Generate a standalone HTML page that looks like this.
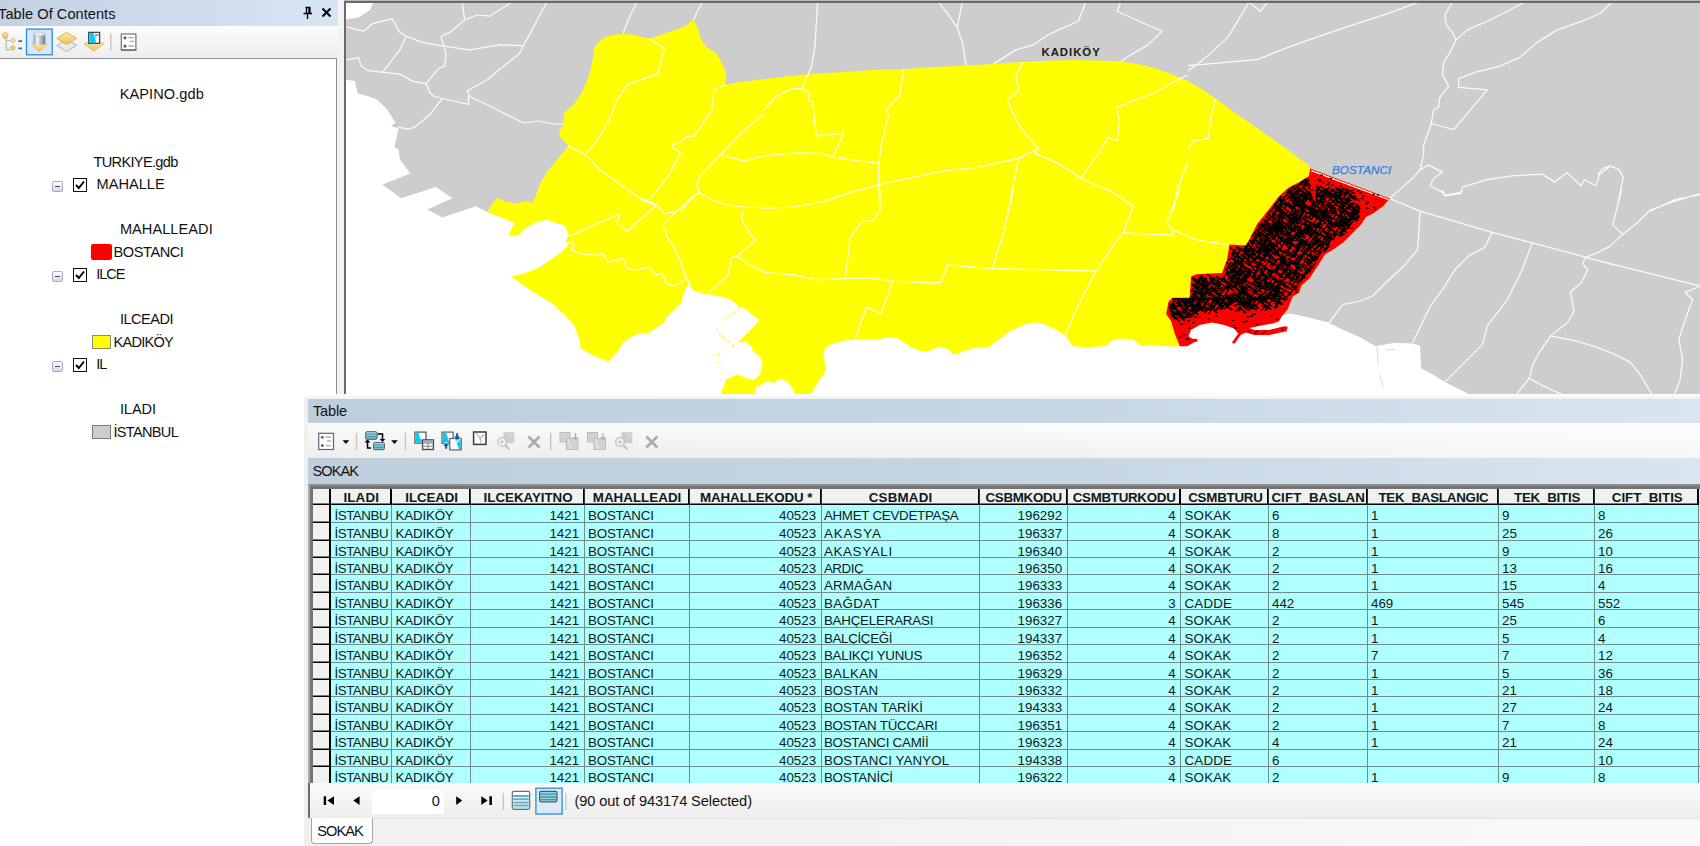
<!DOCTYPE html>
<html lang="tr"><head><meta charset="utf-8"><title>ArcMap - SOKAK</title>
<style>
*{box-sizing:border-box;margin:0;padding:0}
html,body{width:1700px;height:846px;overflow:hidden;background:#fff}
body{position:relative;font-family:"Liberation Sans",sans-serif;color:#000}
.abs,#grid,#grid div,#grid span,#grid i{position:absolute}
.ui{font-family:"Liberation Sans",sans-serif;font-size:14.6px;color:#111;white-space:nowrap;line-height:18px}
/* TOC */
#toc-title{left:0;top:0;width:338px;height:25.5px;background:linear-gradient(90deg,#c3d1e3,#d8e5f4)}
#toc-bar{left:0;top:25.5px;width:338px;height:33.5px;background:linear-gradient(#fdfdfd,#ececec)}
#toc-strip{left:337px;top:59px;width:7px;height:336px;background:#f1f3f6}
#toc-strip2{left:338px;top:0;width:6px;height:59px;background:#f1f3f6}
#toc-tree{left:-1px;top:58px;width:338px;height:800px;background:#fff;border:1px solid #8e8e8e}
.chk{width:14px;height:14px;border:1.5px solid #111;background:#fff}
.exp{width:11px;height:11px;border:1px solid #a9acb8;border-radius:2px;background:linear-gradient(#fff,#d5d8e3)}
.exp:after{content:"";position:absolute;left:2px;top:4px;width:5px;height:1.4px;background:#3d4a8c}
/* table window */
#tw{left:304px;top:394px;width:1396px;height:452px;background:linear-gradient(90deg,#f0f0f0 0%,#f0f0f0 25%,#fafafa 100%)}
#tw-border{left:304px;top:394px;width:1396px;height:5px;background:linear-gradient(#fff,#eef1f5)}
#tw-title{left:308px;top:399px;width:1392px;height:24px;background:linear-gradient(90deg,#bfcedd 0%,#c6d5e3 50%,#d9e6f1 100%)}
#tw-bar{left:308px;top:423px;width:1392px;height:35px;background:linear-gradient(90deg,rgba(255,255,255,0) 20%,rgba(255,255,255,.55) 100%),linear-gradient(#fbfbfb,#ededed)}
#tw-name{left:308px;top:458px;width:1392px;height:26px;background:linear-gradient(90deg,#bfcedd 0%,#c6d5e3 50%,#d9e6f1 100%)}
#tw-gborder{left:308px;top:483.5px;width:1392px;height:334.5px;background:#747474;border-left:2px solid #a9a9a9;border-top:2px solid #8e8e8e}
#grid{overflow:hidden;background:#b0ffff;font-size:13.33px;line-height:16px;color:#0b1a1a}
#grid .hsel{left:0;top:0;background:#f1f1f1;border-right:2px solid #000;border-bottom:1px solid #000;box-shadow:inset 0 -1px 0 rgba(0,0,0,.5);width:18.2px;height:16.2px}
#grid .hc{top:0;height:16.2px;background:#f1f1f1;border-bottom:1px solid #000;text-align:center;font-weight:bold;font-size:13.33px;box-shadow:2px 0 0 #000,inset 0 -1px 0 rgba(0,0,0,.5)}
#grid .hc{clip-path:inset(0 -2px 0 0)}
#grid .hc span{top:1.2px;line-height:15px;white-space:nowrap}
#grid .row{left:0;width:1400px;border-bottom:1px solid #6f8d8d}
#grid .sel{left:0;top:0;bottom:-1px;width:18.2px;background:#f1f1f1;border-right:2px solid #000;border-bottom:1px solid #000;box-shadow:inset 0 -1px 0 rgba(0,0,0,.5);border-top:0}
#grid .c{top:0;bottom:0;padding:2.5px 0 0 3.3px;white-space:nowrap;overflow:hidden;border-right:0;box-shadow:1px 0 0 #6f8d8d}
#grid .c.r{text-align:right;padding:2.5px 4.6px 0 0}
#nav{left:310px;top:783px;width:1390px;height:35.5px;background:linear-gradient(#fbfbfb,#eeeeee);border-bottom:1px solid #e6e6e6}
#navbox{left:372px;top:789.5px;width:72px;height:24px;background:#fff}
#tab{left:310.5px;top:818px;width:62.5px;height:26px;background:#fff;border:1px solid #a6a6a6;border-top:0;border-radius:0 0 4px 4px}
</style></head><body>
<div id="toc-title" class="abs"></div>
<div id="toc-bar" class="abs"></div>
<div id="toc-strip" class="abs"></div><div id="toc-strip2" class="abs"></div>
<div id="toc-tree" class="abs"></div>
<svg class="abs" style="left:300px;top:4px" width="36" height="18" viewBox="0 0 36 18"><g stroke="#000" fill="none"><path d="M5.5 3.5h5M6.5 3.5v6M10 3.5v6M9 3.5v6M3.5 9.5h8.5M7.5 10v5" stroke-width="1.3"/><path d="M22.5 4.5l8 8M30.5 4.5l-8 8" stroke-width="2"/></g></svg>
<!-- toolbar icons -->
<svg class="abs" style="left:0;top:27px" width="150" height="30" viewBox="0 27 150 30">
<defs>
<linearGradient id="cy" x1="0" y1="0" x2="1" y2="0"><stop offset="0" stop-color="#8c97a8"/><stop offset=".3" stop-color="#f4f6f9"/><stop offset=".55" stop-color="#c3cad5"/><stop offset="1" stop-color="#6d7787"/></linearGradient>
<linearGradient id="yl" x1="0" y1="0" x2="0" y2="1"><stop offset="0" stop-color="#fdeab0"/><stop offset="1" stop-color="#eebf55"/></linearGradient>
</defs>
<g><!-- list by drawing order -->
<path d="M6.200 38.500v11.200h4M6.200 40.500h4" stroke="#a9b4c6" stroke-width="1.200" fill="none"/>
<circle cx="5.200" cy="35.400" r="2.900" fill="url(#yl)" stroke="#dcb04a" stroke-width=".8"/>
<path d="M12.800 37.600l2.800 2.800-2.800 2.800-2.800-2.800zM12.800 45l2.800 2.800-2.800 2.800-2.800-2.800z" fill="url(#yl)" stroke="#dcb04a" stroke-width=".8"/>
<path d="M18.400 41.200h3.600M18.400 48.400h3.600" stroke="#2a6f9e" stroke-width="1.700"/></g>
<g><!-- list by source (selected) -->
<rect x="26.500" y="29.100" width="25.700" height="25.700" fill="#d6e8fa" stroke="#2b8ae0" stroke-width="1.300"/>
<path d="M31.700 44.500l7.700 7 7.700-7-3-1.300h-9.400z" fill="url(#yl)" stroke="#dcae45" stroke-width=".7"/>
<path d="M33.500 34v9.300c0 2.600 11.800 2.600 11.800 0v-9.300z" fill="url(#cy)"/>
<ellipse cx="39.400" cy="34" rx="5.900" ry="2.100" fill="#e3e8ef" stroke="#aab3c0" stroke-width=".6"/></g>
<g><!-- list by visibility -->
<path d="M66.700 39.300l9.900 6.100-9.900 6.200-9.900-6.200z" fill="#e6e8ec" stroke="#a7acb5" stroke-width=".9"/>
<path d="M66.700 32.300l9.900 6.100-9.900 6.200-9.900-6.200z" fill="url(#yl)" stroke="#d9ac48" stroke-width=".9"/></g>
<g><!-- list by selection -->
<path d="M84 43.700l9.900 7.400 9.900-7.400-3.500-1.500h-12.800z" fill="url(#yl)" stroke="#dcae45" stroke-width=".7"/>
<rect x="88.700" y="32.400" width="10.900" height="11" fill="#fff" stroke="#3d4a55" stroke-width="1.300"/>
<path d="M89.400 33.100h4.200l1 4.200 1.700 6h-6.900z" fill="#12c8ee"/>
<path d="M95 34h3.600v2h-2.200v2.500h-1z" fill="#9aa3ad"/></g>
<path d="M110.800 33.500v17" stroke="#c2c2c2" stroke-width="1.300"/>
<g><!-- options -->
<rect x="121.300" y="34" width="14.600" height="15.900" fill="#fff" stroke="#66738a" stroke-width="1.200"/>
<path d="M121 50.200h15.400" stroke="#56637a" stroke-width="1"/>
<circle cx="125" cy="37.800" r="1.600" fill="#636363"/><circle cx="125" cy="46.100" r="1.600" fill="#636363"/>
<path d="M128.300 37.600h5.700M129.500 41.400h4.500M128.300 46h5.700" stroke="#a3abb5" stroke-width="1.300"/></g>
</svg>
<!-- tree -->
<div class="abs exp" style="left:52px;top:180.500px"></div>
<div class="abs chk" style="left:73px;top:178px"></div><svg class="abs" style="left:73px;top:178px" width="14" height="14"><path d="M3 7l2.800 3 5.200-6.500" fill="none" stroke="#000" stroke-width="1.900"/></svg>
<div class="abs" style="left:91px;top:244px;width:20.500px;height:16px;background:#ff0000;border-radius:2px"></div>
<div class="abs exp" style="left:52px;top:270.500px"></div>
<div class="abs chk" style="left:73px;top:268px"></div><svg class="abs" style="left:73px;top:268px" width="14" height="14"><path d="M3 7l2.800 3 5.200-6.500" fill="none" stroke="#000" stroke-width="1.900"/></svg>
<div class="abs" style="left:92px;top:335px;width:19px;height:14px;background:#ffff00;border:1px solid #8c8c6e"></div>
<div class="abs exp" style="left:52px;top:360.500px"></div>
<div class="abs chk" style="left:73px;top:358px"></div><svg class="abs" style="left:73px;top:358px" width="14" height="14"><path d="M3 7l2.800 3 5.200-6.500" fill="none" stroke="#000" stroke-width="1.900"/></svg>
<div class="abs" style="left:92px;top:425px;width:19px;height:14px;background:#cdcdcd;border:1px solid #7d7d7d"></div>
<svg id="map" width="1700" height="846" viewBox="0 0 1700 846" style="position:absolute;left:0;top:0">
<defs><clipPath id="mc"><rect x="346" y="3" width="1354" height="391.5"/></clipPath></defs>
<rect x="344" y="0" width="1356" height="1" fill="#b9b9b9"/>
<rect x="344" y="1" width="1356" height="2" fill="#6b6b6b"/>
<rect x="344" y="1" width="2" height="394" fill="#6b6b6b"/>
<g clip-path="url(#mc)">
<rect x="344" y="0" width="1356" height="400" fill="#cdcdcd"/>
<polygon fill="#ffff00" points="488.4,209.5 497.1,197.8 504.6,201.5 514.6,203.3 527.1,201.5 533.3,202.5 539.6,184.6 547,172.1 557,159.6 568.2,145.9 559.5,135.9 559,132.2 563.2,124.7 564.5,112.2 570.7,107.3 574.5,103.5 583.2,89.8 589.4,74.8 593.2,57.4 594.4,47.4 601.9,38.7 611.9,34.9 624.4,33.7 634.3,34.9 649.3,38.7 664.3,33.7 679.2,28.7 686.7,24.9 693,20 697.9,27.4 700.4,37.4 706.7,47.4 716.7,53.6 721.6,62.4 726.1,72.3 725.4,84.8 739.1,82.3 764,79.3 801.4,74.8 838.8,72.3 876.2,69.8 903.7,69.3 938.6,66.8 966,65.4 993.5,63.9 1023.4,61.9 1050.9,60.6 1075.8,59.9 1100.7,60.4 1120.7,61.4 1138.2,63.9 1153.1,67.8 1168.1,72.8 1188,81.1 1203,89.8 1215.4,98.5 1237.9,114.7 1262.8,132.2 1287.8,149.7 1300.2,159.6 1307.7,164.1 1310.2,168.6 1389.6,198.4 1383.4,205.9 1373.5,213.3 1366,217 1361.1,224.5 1351.1,234.4 1343.7,241.9 1333.8,249.3 1325.1,254.3 1318.9,264.2 1313.9,271.7 1308.9,279.1 1301.5,285.3 1299,292.8 1292.8,296.5 1287.8,308.9 1281.6,316.4 1282,400 486,400 488.4,212.4"/>
<g fill="#ffffff">
<polygon points="343.7,2 373.7,2 369.9,10 358.7,17.5 343.7,20"/>
<polygon points="343.7,79.3 355,81.1 357.5,93.5 367.4,96 377.4,99.8 387.4,109.8 395.4,122.7 391.1,126 398.6,128.5 396.1,139.7 394.4,147.2 398.6,149.7 399.9,159.6 410.3,173.4 382.4,184.6 401.1,198.3 436,187.1 452.2,198.3 427.3,209.5 442.3,217.4 475.9,206.2 488.4,212.4 514.6,222.9 508.4,234.9 517.1,236.1 525.8,227.4 537.1,221.9 547,219.4 557,223.7 564.5,224.9 569,234.9 565.7,241.1 568.2,245.4 559.5,253.6 552,258.6 539.6,267.3 524.6,273.6 510.9,276.6 529.6,289.8 552,303.5 564.5,314.7 574.5,325.9 579.5,339.7 580.7,348.4 594.4,355.9 608.1,361.4 619.4,349.6 621.9,343.4 630.6,337.2 640.6,332.7 648.1,333.4 664.3,322.2 666.3,317.6 672.5,311.3 681.3,302.6 683.2,295.1 686.9,286.3 689.4,283.2 692,288.8 693.8,291.3 702.6,293.2 720.1,296.3 730.2,299.4 736.4,303.8 738.3,307.6 742.7,307 759,320.1 754,326.4 737.7,342.7 745.2,341.4 751.5,346.4 752.4,350.8 760,356.5 762.3,364 760,374.4 753.4,380.1 741.5,376.3 738.2,374 726.4,379.2 723.6,386.7 719.8,395.2 340,395"/>
<polygon points="754.3,395.2 756.2,386.7 761.9,384.8 765.7,381.5 771.3,381.1 773.2,383.9 775.1,381.1 780.8,379.2 786.5,381.1 791.7,386.7 795.4,395.2"/>
<polygon points="810.1,395.2 815.8,385.8 822.4,375.4 826.2,369.7 824.8,362.2 823.3,354.6 825.2,348 831.8,344.2 841.3,341.3 850,339.9 868.8,339.2 878.7,339.7 886.2,337.2 896.2,337.7 903.7,342.2 911.2,347.6 921.1,350.9 927.4,352.1 933.6,348.4 941.1,346.6 948.6,349.6 953.6,355.1 963.6,350.9 976,347.6 988.5,347.1 998.5,339.7 1008.4,332.2 1020.9,325.9 1028.4,323.4 1035.9,322.2 1045.9,324.7 1058.3,330.9 1067.1,337.2 1072.1,345.9 1085.8,347.6 1105.7,345.9 1113.2,339.7 1123.2,338.4 1133.2,339.7 1140.7,345.9 1148.1,344.7 1158.1,345.9 1173.1,346.6 1179.3,346.1 1179.8,346.2 1183.5,333.8 1194.7,321.3 1224.5,318.9 1249.3,321.3 1269.2,318.9 1281.6,315.9 1290.3,313.5 1307.7,317.2 1327.7,322.2 1342.7,329.7 1360.1,337.2 1375.1,345.9 1380.1,345.2 1395,342.7 1412.5,343.4 1420,345.9 1421.2,368.3 1434.9,375.8 1444.9,382.1 1459.9,389.6 1472.4,395.8"/>
</g>
<path d="M725 318l.6 3M717.400 328l.5 4M718.900 333.900l11.300 8.800M727.700 316.400l12.500-7.600M718 355l1.800-2.600M718.400 362.200v1M720.500 367l.4 1M723.800 373l.5 1.200M721 379l.8 1.300" stroke="#ffff00" stroke-width="1.100" stroke-dasharray="2.500 1.200" fill="none"/>
<circle cx="733.300" cy="345.800" r="1.300" fill="#ffff00"/>
<path d="M1377 346l1.300 18.600M1379.500 374.600l3.800 12.400M1386 349.600h9" stroke="#dcdcdc" stroke-width="1" fill="none"/>
<path d="M343.7 26.2 L363.7 31.2 L372.4 23.7 L392.4 18.7 L399.9 32.4 L406.1 36.2 L422.3 42.4 L443.5 46.1 L469.7 49.9 L499.6 44.9 L523.3 45.6M462.2 2 L464.7 20 L449.8 32.4 L441 36.2 L443.5 46.1 L446 53.6 L444.8 66.1 L438.5 68.6 L426.1 83.6 L429.8 92.3 L433.5 96 L442.3 98.5 L468.5 104.3 L468.5 96 L489.7 106 L523.3 123 L538.3 121 L554.5 124.2 L563.2 124M464.7 20 L477.2 15 L489.7 16.2 L512.1 2M547 2 L537.1 20 L529.6 34.9 L523.3 45.6 L519.6 53.6 L502.1 67.3 L487.2 79.8 L467.2 91 L469.7 96M343.7 59.9 L358.7 57.9 L361.2 66.1 L367.4 70.3 L382.4 72.3 L399.9 74.1 L412.3 81.1 L426.1 83.6M406.1 36.2 L399.9 49.9 L382.4 72.3M442.3 98.5 L429.8 114.7 L414.8 127.2 L408.6 129.2 L397.9 127.2M636.8 2 L629.3 17.5 L623.1 33.2M702.9 2 L696.7 12.5 L693.7 20M649.3 38.7 L664.3 48.6 L658 73.6 L626.9 84.8 L616.9 99.8 L610.6 117.2 L599.4 137.2 L586.9 152.7M568.2 145.9 L585.7 154.7 L599.4 169.6 L621.9 185.8 L641.8 199.6 L656.8 205.8M725.4 84.8 L714.2 89.8 L711.7 109.8 L694.2 135.9 L685.5 136.7 L679.2 143.4 L671.8 144.2 L673 148.4 L680.5 152.2 L671.8 169.6 L661.8 184.6 L649.3 199.6 L641.8 199.6M764 113.5 L739.1 134.7 L720.4 154.7 L699.2 177.1 L696.7 183.3 L699.2 192.1 L689.2 199.6 L681.7 211M720.4 154.7 L744.1 160.9 L764 155.9M641.8 198.7 L656.8 205 L626.9 231.2 L616.9 222.4 L619.4 213.7 L569.5 236.1M558.3 242.4 L573.2 242.9 L574.5 243.6 L572 249.9 L579.5 253.6 L594.4 255.4 L603.2 253.6 L608.1 262.3 L623.1 258.6 L626.9 268.6 L636.8 269.8 L649.3 267.3 L655.5 274.8 L661.8 273.6 L666.8 283.5 L674.2 286 L686.7 278.6M656.8 205 L664.3 213.7 L676.7 211.2 L699.2 192.5M676.7 211.2 L663 224.9 L666.8 236.1 L675.5 249.9 L681.7 264.8 L685.5 277.3 L690.5 283.5M699.2 192.5 L714.2 201.2 L729.1 205 L744.1 207 L764 208M744.1 207 L741.6 219.9 L749.1 232.4 L755.3 239.9 L736.6 256.1 L731.6 257.3 L727.9 274.8 L719.1 283.5 L709.2 292.3M736.6 256.1 L749.1 264.8 L764 271.1M817.6 2 L815.1 44.9 L811.4 67.3 L801.4 88.6M764 109.8 L776.5 96 L791.4 88.6 L801.4 88.6 L810.1 92.3 L807.7 99.8 L812.6 102.3 L816.4 135.9 L843.8 133.4 L832.6 157.1M764 155.9 L796.4 152.7 L821.4 153.4 L832.6 157.1 L858.8 160.9 L880 163.4M903.7 69.8 L899.9 94.8 L886.2 109.8 L888.7 114.7 L881.2 144.7 L878.7 164.6 L878.7 184.6 L880 211M764 208.3 L793.9 207 L826.4 200.8 L851.3 192.1 L878.7 184.6 L913.7 177.1 L943.6 170.9 L978.5 167.1 L1018.4 158.4 L1038.4 148.4M1023.4 62.4 L1015.9 74.8 L1018.4 91 L1007.2 99.8 L1015.9 119.7 L1025.9 134.7 L1038.4 148.4 L1034.6 153.4 L1058.3 163.4 L1080.8 178.3 L1109.5 190.8M1018.4 158.4 L1013.4 184.6 L1008.4 211M1188 74.8 L1173.1 82.3 L1153.1 93.5 L1133.2 101 L1117 107.3 L1119.5 122.2 L1117 140.9 L1108.2 137.2 L1095.8 157.1 L1080.8 178.3M1188 162.1 L1178.1 187.1 L1173.1 211M938.6 2 L948.6 15 L957.3 27.4 L962.3 42.4 L966 65.4M962.3 2 L957.3 27.4M1085.8 2 L1078.3 21.2 L1058.3 29.9 L1045.9 36.2 L1033.4 44.9 L1015.9 49.9 L993.5 63.9M1120.7 2 L1117 11.2 L1130.7 17.5 L1161.9 31.2 L1148.1 44.9 L1130.7 54.9 L1120.7 61.4M880 190 L880 210 L872.5 221.2 L862.5 221.2 L850.1 237.4 L847.6 259.8 L845.1 278.6M764 272.3 L793.9 274.8 L816.4 279.8 L845.1 278.6 L868.8 277.8 L892.5 281 L928.6 282.8 L941.1 282.3 L947.3 264.8 L992.2 268.6 L1045.9 269.8 L1095.8 271.1M892.5 281 L881.2 313.5 L866.3 307.2 L855 339.7M1013.4 190 L1003.5 232.4 L992.2 268.6M1109.5 190 L1133.2 206.2 L1123.2 232.4 L1115.7 242.4 L1095.8 271.1 L1080.8 299.8 L1064.6 335.9M1123.2 232.4 L1148.1 234.4 L1173.1 234.9 L1173.1 229.9 L1166.8 223.7 L1175.6 200 L1179.3 190M1173.1 229.9 L1188 236.1M1249.1 2 L1260.3 11.2 L1267.8 2M1249.1 2 L1227.9 37.4 L1203 59.9 L1188 71.1M1188 65.4 L1203 64.4 L1225.4 62.4 L1257.8 59.4 L1287.8 47.4 L1337.7 29.9 L1387.6 13.7 L1418.7 2M1452.4 2 L1444.9 15 L1446.2 24.9 L1452.4 32.4 L1456.1 39.9 L1449.9 52.4 L1443.7 62.4 L1442.4 74.8 L1448.7 86.1 L1439.9 97.3 L1438.7 107.3 L1433.7 109.8 L1431.2 123.5 L1427.5 134.7 L1423.7 144.7 L1423.7 154.7 L1420 169.6 L1412.5 178.3 L1402.5 187.1 L1390 198.3M1456.1 39.9 L1467.4 29.9 L1487.3 21.2 L1509.8 10 L1524.7 2M1612 2 L1599.6 13.7 L1582.1 21.2 L1557.2 29.9 L1537.2 42.4 L1519.8 57.4 L1499.8 66.1 L1474.9 72.3 L1458.6 78.6 L1458.6 87.3 L1487.3 89.8 L1453.7 129.7 L1431.2 123.5M1420 169.6 L1428.7 165.1 L1442.4 172.1 L1433.7 178.3 L1430 185.8 L1442.4 192.1 L1444.9 195.8 L1461.1 193.3 L1462.4 187.1 L1487.3 179.6 L1512.3 175.9 L1542.2 174.1 L1554.7 182.1 L1567.1 172.6 L1580.9 185.8 L1584.6 179.6 L1595.8 185.8 L1599.6 174.6 L1609.6 166.6M1215.4 98.5 L1211.7 112.2 L1208 138.4 L1193 140.9 L1188 149.7M1597.8 174.6 L1602.8 168.4 L1610.2 165.9 L1619 169.6 L1623.2 177.1 L1620.2 192.1 L1616.5 211M1700 194.6 L1675.1 199.6 L1650.2 211M1390 198.7 L1420 211.2 L1492.3 232.4 L1532.2 242.9 L1584.6 256.8 L1612 264.3M1420 211.2 L1418.7 234.9 L1417.5 249.9 L1402.5 267.3 L1385.1 283.5 L1372.6 296 L1360.1 301 L1342.7 304.7 L1327.7 324.7M1492.3 232.4 L1484.8 247.4 L1469.9 254.9 L1454.9 269.8 L1442.4 289.8 L1431.2 304.7 L1423.7 319.7 L1412.5 342.7M1532.2 242.9 L1522.2 269.8 L1507.3 299.8 L1487.3 325.9 L1482.3 344.7 L1462.4 364.6 L1444.9 382.1M1442.4 190 L1444.9 195 L1459.9 192.5 L1462.4 190M1188 237.4 L1203 241.1 L1227.9 244.4M1585.3 257.3 L1625.2 267.3 L1665.1 277.3 L1700 286M1621.5 190 L1616.5 210 L1612.7 224.9 L1622.7 234.4 L1610.2 246.1 L1595.3 253.6 L1585.3 257.3M1700 193.7 L1675.1 201.2 L1650.2 210 L1637.7 222.4 L1622.7 234.4M1585.3 257.3 L1582.8 263.6 L1587.8 269.8 L1581.6 282.3 L1570.3 292.3 L1574.1 311 L1567.8 322.2 L1550.4 335.9 L1537.9 354.6 L1532.9 364.6 L1529.2 378.3 L1515.5 395.8M1550.4 335.9 L1575.3 340.9 L1592.8 345.9 L1612.7 353.4 L1630.2 362.1 L1640.2 374.6 L1652.7 395.8M1700 286 L1685.1 292.3 L1692.6 299.8 L1685.1 319.7 L1678.8 339.7 L1682.6 359.6 L1680.1 379.6 L1673.9 395.8M1529.2 378.3 L1545.4 387.1 L1565.3 395.8" fill="none" stroke="#ffffff" stroke-width="1.25" stroke-opacity=".9" stroke-linejoin="round"/>
<polygon fill="#ff0000" points="1310.2,168.6 1389.6,198.4 1383.4,205.9 1373.5,213.3 1366,217 1361.1,224.5 1351.1,234.4 1343.7,241.9 1333.8,249.3 1325.1,254.3 1318.9,264.2 1313.9,271.7 1308.9,279.1 1301.5,285.3 1299,292.8 1292.8,296.5 1287.8,308.9 1281.6,316.4 1279.1,321.3 1274.2,323.1 1261.7,325.6 1249.3,328 1254.3,330 1269.2,330 1284.1,326.3 1287.8,326.8 1286.6,331.3 1269.2,335 1254.3,335 1245.6,332.5 1240.6,335 1234.4,343.7 1231.9,342.5 1238.2,333.8 1234.4,328.8 1224.5,325.1 1212.1,322.6 1199.7,325.1 1191,330 1188.5,336.2 1195.9,341.2 1187.2,346.2 1179.8,346.2 1174.8,333.8 1171.1,321.3 1166.1,313.9 1168.6,301.5 1172.3,297.8 1189.7,297.8 1191,276.6 1195.9,274.2 1222,272.9 1227,259.3 1229.5,244.4 1245.6,245.6 1249.3,239.4 1256.8,224.5 1266.7,212.1 1279.1,195.9 1289.1,187.2 1299,182.3 1308.9,176.1"/>
<polygon fill="#ff0000" points="1188,338.9 1196.7,338.7 1198,341.2 1188,342.9"/>
<path d="M1311.3 170.6L1388.3 199.5" stroke="#fff" stroke-width="1.2" fill="none"/>
<path d="M1293.9 188.8L1296.0 186.0M1326.5 192.6L1332.6 197.1M1246.0 253.0L1252.6 258.3M1304.0 257.0L1309.9 261.2M1317.6 243.4L1321.9 245.9M1200.0 293.3L1204.5 287.7M1311.2 196.2L1320.4 201.7M1261.1 296.9L1268.1 289.1M1258.4 275.7L1261.9 271.6M1277.9 274.6L1283.2 277.6M1313.7 192.8L1322.3 198.5M1272.9 277.8L1277.4 281.8M1284.5 225.9L1289.2 220.6M1285.3 279.3L1291.4 271.4M1274.9 238.3L1278.9 231.4M1170.6 306.4L1173.2 302.1M1188.7 299.1L1193.4 302.0M1191.9 283.5L1198.6 288.7M1314.4 222.2L1317.7 218.3M1243.3 292.2L1248.1 295.6M1259.9 273.5L1262.5 270.5M1241.5 279.3L1245.1 281.8M1319.6 229.0L1324.7 221.6M1280.5 247.6L1285.7 241.7M1306.6 195.6L1312.9 187.9M1326.5 205.6L1332.3 209.6M1316.0 225.7L1318.2 223.0M1266.2 300.1L1270.9 294.7M1322.4 200.8L1325.8 203.0M1270.1 248.4L1272.5 245.9M1170.0 310.3L1174.8 304.0M1263.5 249.3L1269.2 253.7M1350.6 213.4L1353.8 215.9M1193.2 278.3L1201.4 284.1M1355.2 211.6L1359.3 206.1M1266.8 225.2L1269.9 227.3M1254.9 282.7L1259.3 276.0M1316.7 219.8L1323.5 212.7M1245.2 254.0L1248.3 256.1M1320.3 186.5L1328.9 191.5M1268.8 213.4L1272.3 209.7M1253.3 273.9L1255.8 275.7M1309.1 255.7L1313.1 258.6M1252.6 275.7L1257.0 269.8M1238.5 247.9L1245.1 253.3M1172.4 304.6L1174.9 306.3M1287.8 192.4L1293.7 185.9M1337.3 231.2L1342.4 235.9M1192.5 300.8L1198.3 293.3M1263.5 301.4L1268.7 295.7M1301.1 213.7L1305.5 206.9M1311.9 247.7L1315.2 244.1M1313.1 208.8L1318.3 212.0M1258.5 279.6L1263.7 273.3M1215.3 283.9L1218.4 286.5M1259.1 250.8L1264.5 244.4M1255.7 247.5L1260.9 242.1M1241.4 309.5L1244.6 311.4M1310.0 212.2L1317.8 217.8M1262.9 303.1L1271.0 309.2M1227.4 301.6L1230.7 297.0M1309.2 218.1L1315.7 209.3M1279.8 233.3L1285.8 225.5M1295.6 271.4L1298.7 267.3M1291.2 221.2L1296.2 215.8M1260.7 276.1L1263.1 272.5M1205.0 307.1L1210.6 310.7M1231.2 289.5L1233.5 285.5M1267.5 229.4L1272.6 234.1M1275.5 226.8L1284.3 231.9M1239.4 274.7L1245.7 267.2M1356.9 214.8L1359.3 211.3M1288.9 255.4L1291.3 252.3M1280.4 232.4L1282.7 234.3M1330.7 211.2L1333.3 213.1M1246.0 274.5L1249.8 268.6M1296.9 236.2L1302.2 239.9M1237.6 246.7L1241.9 250.7M1221.3 304.5L1227.4 295.6M1226.1 294.9L1230.3 297.8M1337.6 189.9L1346.1 195.5M1260.9 311.1L1263.7 308.0M1251.3 276.9L1259.4 284.3M1347.7 227.5L1352.5 222.1M1313.8 230.1L1318.6 234.4M1256.7 266.0L1263.8 271.8M1177.8 310.0L1180.7 311.9M1283.2 226.9L1288.8 232.6M1216.6 279.4L1220.4 283.2M1307.5 265.7L1310.1 261.6M1199.5 290.7L1206.3 296.9M1282.8 221.6L1289.9 227.5M1282.5 253.4L1285.6 249.5M1272.1 228.5L1279.1 220.1M1303.6 240.3L1309.4 243.7M1340.4 213.1L1344.0 209.0M1342.1 208.6L1348.7 199.9M1259.0 295.2L1261.6 297.2M1236.3 300.6L1244.0 305.6M1289.9 278.5L1294.7 282.0M1293.0 208.8L1297.2 204.1M1237.4 271.2L1242.7 263.5M1273.1 272.4L1277.1 267.6M1296.1 240.8L1300.5 234.7M1308.8 208.2L1311.4 204.8M1279.6 231.4L1281.5 228.6M1192.9 297.8L1196.9 290.9M1238.5 252.0L1241.2 248.7M1238.3 284.1L1246.5 289.3M1171.2 306.9L1179.7 312.8M1287.3 265.0L1290.8 267.8M1265.8 237.2L1271.8 228.3M1325.5 207.0L1329.1 202.7M1291.1 219.4L1298.0 224.1M1251.9 245.3L1257.7 236.1M1254.6 239.2L1262.3 244.7M1323.6 252.0L1325.8 248.6M1346.4 225.5L1350.2 219.6M1190.6 306.2L1196.7 297.3M1344.6 199.4L1349.6 202.3M1313.2 197.7L1318.1 202.2M1260.0 262.2L1262.7 264.0M1340.0 199.4L1346.1 203.4M1288.8 227.2L1295.3 231.3M1338.7 194.4L1342.3 189.7M1311.4 207.1L1316.4 211.2M1265.2 310.4L1270.3 304.3M1276.1 219.0L1280.9 223.1M1235.9 301.9L1242.0 293.3M1274.5 225.9L1280.5 229.8M1196.2 312.9L1200.2 306.6M1348.7 195.2L1355.3 199.9M1293.2 238.7L1295.4 236.0M1307.4 249.1L1311.3 243.9M1293.5 205.7L1298.2 199.0M1189.2 305.1L1193.1 308.4M1271.6 237.3L1280.1 243.4M1330.6 208.4L1334.4 204.3M1335.9 222.0L1344.1 227.4M1257.6 256.6L1262.0 251.8M1307.1 257.9L1311.7 262.0M1281.1 260.5L1283.0 257.9M1184.9 309.2L1190.9 315.3M1270.7 275.6L1273.1 271.6M1288.5 222.6L1293.7 214.8M1292.8 218.7L1295.3 220.7M1304.8 227.8L1310.5 233.1M1278.8 220.7L1281.0 216.6M1260.8 295.7L1266.3 290.3M1278.7 198.4L1282.4 201.5M1311.9 240.5L1315.1 236.2M1248.0 260.2L1254.2 252.3M1269.8 289.1L1273.1 284.5M1194.8 297.8L1200.1 301.6M1337.2 209.1L1344.8 213.9M1306.9 263.1L1311.4 266.4M1309.1 193.4L1311.4 189.9M1185.9 308.0L1190.9 311.4M1263.1 267.9L1267.6 270.1M1211.9 304.4L1217.2 297.9M1289.9 259.5L1296.4 264.4M1288.8 193.7L1292.1 188.4M1306.2 200.9L1308.0 198.3M1340.8 227.4L1344.9 221.9M1276.5 253.5L1283.4 257.8M1308.6 268.8L1312.1 263.8M1297.1 265.1L1302.2 257.7M1208.7 295.4L1211.2 291.9M1322.3 203.7L1325.6 206.3M1320.2 234.4L1326.4 239.8M1317.8 243.6L1322.8 246.8M1306.7 216.1L1311.1 219.5M1260.4 269.9L1264.2 265.4M1193.0 299.8L1196.0 296.2M1283.7 259.4L1289.4 262.9M1319.9 208.9L1322.6 205.5M1328.2 203.0L1335.5 208.2M1251.8 307.5L1254.6 303.5M1263.3 257.8L1266.4 253.2M1301.6 247.3L1306.0 251.4M1285.5 275.0L1288.2 277.6M1259.7 290.8L1264.6 283.6M1286.3 223.3L1293.5 229.0M1261.9 223.5L1266.1 227.4M1306.1 196.6L1308.3 194.2M1284.9 270.1L1289.6 263.3M1253.8 291.8L1260.2 284.2M1336.4 195.4L1340.4 198.6M1291.5 210.2L1295.8 205.3M1276.7 244.6L1280.9 240.4M1192.0 284.8L1198.7 290.3M1286.9 232.1L1290.1 234.9M1277.3 244.6L1282.7 237.0M1235.7 274.6L1241.0 267.0M1310.8 222.6L1319.9 228.4M1229.6 268.0L1234.8 262.2M1338.6 235.8L1344.6 227.6M1324.2 220.2L1327.2 216.0M1196.6 312.7L1199.0 309.3M1317.6 252.4L1321.9 247.0M1240.5 290.7L1243.4 292.6M1243.5 279.1L1245.9 281.0M1240.9 253.9L1244.4 257.3M1259.1 261.7L1262.2 263.7M1322.6 216.8L1328.2 221.3M1319.7 202.5L1323.9 196.7M1260.6 257.7L1264.5 261.3M1282.6 266.9L1284.6 264.2M1302.8 187.3L1308.9 192.6M1169.1 307.9L1175.6 313.7M1298.5 219.3L1301.6 221.5M1320.6 197.7L1327.5 201.7M1236.2 282.8L1244.4 289.2M1179.2 316.2L1184.1 320.9M1288.7 196.3L1292.2 199.0M1253.6 304.9L1257.7 308.0M1218.4 297.5L1222.1 301.0M1264.0 266.0L1271.8 271.6M1250.9 254.4L1256.8 247.2M1289.1 203.8L1292.0 205.8M1309.2 238.6L1312.8 234.0M1245.7 289.9L1249.2 286.2M1199.9 295.6L1207.1 300.5M1277.5 299.8L1282.5 304.0M1334.2 227.7L1340.1 219.5M1308.4 244.8L1312.9 239.0M1308.6 212.6L1315.9 217.2M1186.0 305.2L1188.3 301.9M1262.3 248.7L1265.6 250.9M1296.0 248.3L1300.9 240.0M1246.5 303.5L1252.8 295.0M1316.3 223.4L1323.1 228.9M1241.6 255.2L1249.8 262.0M1349.8 214.4L1351.6 211.9M1295.5 213.2L1301.5 206.2M1289.5 212.5L1296.7 218.6M1278.7 218.8L1282.2 214.8M1254.4 276.7L1258.1 279.5M1304.0 241.9L1309.2 246.1M1240.8 263.8L1243.7 260.6M1338.3 209.9L1341.1 206.7M1177.1 301.8L1183.0 305.8M1327.6 232.7L1334.4 224.1M1246.2 277.2L1251.5 271.3M1265.2 282.5L1272.3 286.5M1290.3 280.5L1292.2 278.2M1276.5 235.1L1282.3 240.4M1254.1 280.1L1259.9 284.4M1280.8 275.0L1287.3 267.6M1262.1 245.1L1268.2 238.0M1208.7 293.6L1216.4 299.6M1317.0 258.2L1321.1 252.4M1298.2 231.2L1305.2 236.0M1243.7 253.7L1251.2 246.0M1259.3 238.0L1266.0 244.0M1292.0 216.0L1299.9 223.6M1266.1 249.4L1269.0 251.4M1278.0 270.0L1280.0 267.7M1197.6 285.5L1205.1 292.3M1178.7 312.7L1185.1 317.3M1242.4 291.4L1247.2 285.0M1225.4 305.9L1232.2 309.8M1351.4 215.3L1356.0 209.2M1326.5 226.1L1332.1 229.9M1323.7 214.2L1326.7 209.9M1327.2 193.0L1335.1 197.9M1288.1 259.1L1293.2 263.9M1245.0 252.6L1247.8 249.8M1264.4 252.9L1271.3 258.9M1318.0 209.4L1321.1 211.7M1273.8 227.0L1281.1 232.0M1323.6 231.7L1331.6 238.2M1333.9 194.4L1338.8 197.7M1303.1 247.6L1307.5 240.9M1305.0 185.2L1309.1 180.2M1313.3 202.7L1318.3 196.4M1296.2 264.5L1301.2 256.9M1262.3 274.9L1269.4 279.4M1274.0 205.1L1279.8 199.4M1272.3 215.6L1275.5 210.8M1336.9 194.9L1344.9 200.1M1273.3 289.3L1276.2 286.1M1341.0 223.6L1345.2 218.6M1258.0 231.0L1260.2 228.4M1259.8 283.1L1265.0 288.4M1291.4 211.2L1299.2 215.7M1225.5 270.8L1230.4 262.6M1273.9 229.7L1276.7 231.6M1275.0 272.4L1281.8 264.3M1261.3 252.4L1267.0 246.9M1287.3 195.8L1292.9 199.2M1202.3 285.5L1206.5 278.9M1199.8 285.2L1203.3 279.7M1274.7 225.5L1280.7 229.6M1264.7 243.0L1272.4 235.5M1287.0 297.2L1290.7 292.9M1294.2 261.8L1298.6 256.6M1291.2 217.8L1297.3 223.1M1332.0 208.1L1335.4 210.4M1279.5 259.8L1282.2 255.6M1204.9 284.5L1208.7 287.7M1272.5 213.7L1279.2 205.9M1277.0 302.5L1279.8 299.4M1262.5 254.9L1269.3 246.6M1265.1 248.2L1271.4 239.5M1287.7 237.0L1289.5 234.5M1282.1 206.7L1285.5 209.0M1335.0 198.2L1341.4 204.4M1266.6 227.1L1273.6 230.6M1322.9 192.1L1326.8 194.5M1253.4 298.3L1256.2 299.7M1221.5 280.0L1226.4 274.0M1314.1 214.7L1319.3 217.2M1266.9 228.3L1270.3 230.5M1287.7 205.7L1291.8 209.5M1213.0 308.0L1218.6 301.2M1289.9 228.1L1293.6 231.3M1321.0 201.1L1326.3 193.7M1309.3 249.0L1315.5 253.0M1251.7 257.1L1257.3 262.4M1192.4 279.3L1198.0 284.2M1317.4 241.3L1321.1 237.2M1198.7 310.7L1204.0 304.7M1340.0 221.7L1345.0 214.3M1337.7 228.7L1340.6 224.4M1228.2 305.7L1232.1 300.9M1297.3 229.5L1303.6 222.6M1226.0 269.9L1232.5 274.4M1308.1 226.8L1310.6 222.8M1268.7 297.2L1273.4 301.6M1270.2 265.5L1275.5 259.7M1229.4 282.6L1234.5 287.1M1292.6 255.3L1297.6 258.5M1268.2 214.9L1274.0 218.5M1205.1 288.1L1209.4 292.2M1315.4 209.7L1324.5 214.6M1244.2 305.2L1247.7 300.3M1343.9 230.8L1346.7 232.3M1302.8 209.4L1310.1 214.8M1290.0 218.5L1296.6 222.1M1196.2 301.2L1199.2 304.0M1344.4 197.5L1348.0 200.0M1298.1 187.2L1304.3 192.7M1282.9 261.9L1285.1 259.3M1187.6 317.5L1189.6 315.2M1288.4 260.1L1294.5 252.5M1356.8 211.3L1359.4 207.7M1244.9 256.3L1249.4 259.7M1311.8 218.6L1315.2 213.3M1346.0 217.6L1352.2 210.3M1296.2 190.7L1298.6 188.2M1301.1 222.6L1305.8 225.6M1265.1 266.6L1269.4 259.7M1311.0 234.9L1315.3 229.1M1283.6 272.9L1291.3 278.2M1315.1 213.3L1319.8 216.8M1280.3 263.7L1285.4 256.3M1294.7 196.5L1304.1 201.5M1342.6 220.4L1349.4 227.1M1235.6 292.8L1238.5 295.0M1301.8 241.1L1305.4 243.6M1295.0 265.9L1298.6 269.3M1345.9 212.8L1348.6 215.3M1304.8 223.1L1309.3 216.6M1330.3 192.5L1337.8 198.9M1204.9 304.5L1208.8 299.9M1268.3 252.3L1272.4 246.1M1183.6 302.0L1185.6 298.9M1313.5 260.8L1316.6 257.4M1231.6 304.2L1234.2 301.0M1288.9 222.6L1291.4 224.4M1215.2 304.6L1218.9 299.4M1333.4 213.1L1337.4 215.5M1293.1 284.0L1298.9 276.6M1205.3 312.0L1207.3 309.7M1178.2 314.2L1182.2 316.9M1285.0 234.9L1289.1 237.1M1199.7 306.1L1205.0 297.7M1297.9 218.6L1301.4 221.0M1264.3 241.4L1272.6 248.0M1246.0 270.7L1251.0 275.0M1247.7 307.4L1253.2 299.4M1279.8 225.3L1282.9 221.3M1273.5 207.2L1276.2 209.0M1238.2 267.7L1245.1 272.8M1232.1 269.2L1240.1 276.1M1266.6 216.6L1274.3 221.8M1311.2 203.7L1320.1 208.6M1329.9 207.8L1336.5 212.0M1309.6 200.0L1316.2 205.8M1253.8 288.6L1259.0 282.8M1290.5 193.5L1297.7 198.6M1308.5 233.1L1314.2 225.3M1336.6 192.1L1343.0 195.7M1308.6 253.8L1311.0 255.8M1300.9 212.3L1303.9 208.2M1266.7 222.6L1270.9 216.2M1232.3 293.8L1236.1 296.2M1320.3 200.7L1323.7 196.1M1320.2 245.2L1325.0 248.3M1176.1 306.6L1182.3 299.7M1310.3 193.4L1316.8 199.5M1280.1 237.7L1286.0 242.8M1292.6 272.4L1299.0 265.7M1213.2 297.0L1219.7 301.1M1274.6 308.5L1280.1 301.0M1232.8 264.7L1234.6 262.3M1246.0 263.3L1252.5 266.7M1200.9 310.3L1206.6 302.7M1209.5 308.9L1212.5 304.2M1274.1 269.0L1282.1 276.3M1296.5 195.3L1299.3 197.6M1286.3 239.1L1293.0 244.0M1288.8 234.2L1293.6 229.0M1242.1 284.2L1246.0 287.3M1271.9 239.4L1277.5 233.1M1278.4 295.6L1281.7 298.8M1350.3 203.4L1354.7 207.8M1296.8 226.2L1305.1 232.9M1317.8 225.6L1322.3 219.8M1242.4 283.5L1245.5 279.2M1288.3 218.7L1293.4 210.6M1276.4 226.9L1280.3 229.9M1246.6 296.1L1249.6 293.0M1199.6 284.5L1203.6 279.9M1324.0 229.3L1326.8 226.3M1309.2 235.5L1314.0 238.7M1263.1 299.2L1268.2 302.8M1277.3 220.1L1282.2 213.3M1312.0 246.7L1318.5 252.8M1338.2 198.0L1341.3 193.8M1326.9 214.9L1331.1 218.4M1235.1 263.2L1240.2 256.3M1314.5 244.7L1319.8 239.2M1269.2 243.0L1276.2 246.9M1274.2 205.7L1283.3 211.5M1279.2 279.8L1281.8 281.8M1264.4 240.5L1268.0 236.7M1243.8 278.0L1250.9 270.0M1301.6 202.9L1309.1 208.0M1328.7 223.2L1334.7 216.8M1304.4 183.2L1312.4 188.7M1290.0 283.3L1296.2 288.3M1276.8 221.8L1279.4 223.9M1316.6 248.9L1323.0 242.1M1258.1 299.2L1263.1 294.0M1232.3 269.3L1240.7 275.7M1310.2 234.1L1311.8 231.5M1260.2 268.9L1264.2 271.2M1235.4 306.7L1237.9 303.6M1279.0 267.4L1285.2 271.8M1306.3 244.2L1309.6 246.3M1260.9 229.3L1268.8 235.6M1310.5 213.7L1316.4 205.3M1257.4 234.4L1260.0 236.4M1275.2 262.9L1277.4 259.3M1273.6 299.7L1278.9 293.4M1286.4 245.3L1289.3 241.6M1327.3 204.0L1335.9 210.5M1265.9 279.3L1272.3 271.9M1331.6 189.9L1335.9 193.2M1278.7 224.7L1281.8 226.5M1280.6 249.4L1288.8 255.8M1276.6 211.1L1283.2 204.0M1336.2 200.4L1343.1 205.6M1311.8 215.0L1318.1 218.6M1231.9 254.1L1235.9 258.1M1326.4 220.3L1332.1 224.8M1215.5 284.1L1220.7 278.2M1181.8 300.5L1188.1 305.7M1309.9 200.8L1315.3 194.2M1218.9 290.8L1222.5 287.2M1241.8 281.8L1247.4 275.0M1183.7 311.3L1187.4 314.2M1240.0 294.7L1246.4 287.7M1297.6 218.6L1300.0 216.0M1295.3 221.1L1298.8 223.5M1234.1 259.6L1239.5 252.1M1211.8 289.4L1219.7 296.3M1333.4 211.2L1336.0 212.7M1257.2 251.3L1262.5 244.4M1310.6 263.4L1316.0 254.3M1268.4 213.9L1271.9 209.6M1319.7 195.0L1322.9 197.1M1219.1 296.4L1225.1 287.3M1256.1 282.2L1262.7 287.3M1239.5 302.8L1246.7 309.5M1238.2 309.6L1240.3 307.3M1255.6 281.5L1258.5 283.1M1202.2 284.0L1206.9 288.0M1349.2 208.3L1357.7 213.3M1206.9 307.4L1210.4 310.3M1231.5 277.9L1237.3 270.7M1212.1 300.7L1215.5 296.9M1255.0 260.8L1257.5 256.6M1313.1 204.6L1317.0 198.0M1345.6 193.3L1348.0 190.7M1312.8 205.2L1317.4 199.5M1293.3 254.3L1297.5 248.8M1267.4 272.1L1275.0 279.7M1200.2 275.7L1205.0 279.7M1353.9 215.7L1356.1 213.0M1300.0 206.7L1302.2 208.8M1258.6 277.8L1262.2 273.5M1183.3 320.1L1185.5 316.7M1311.2 228.7L1316.6 233.0M1291.0 243.0L1297.1 247.6M1234.3 283.5L1239.4 275.5M1302.0 277.0L1304.5 273.9M1287.2 216.8L1294.2 222.0M1355.3 204.0L1358.6 206.8M1174.3 309.6L1177.5 305.5M1199.7 280.1L1202.2 276.4M1220.1 282.7L1228.5 288.9M1334.2 222.9L1341.1 226.5M1321.1 241.3L1325.0 244.1M1247.8 258.2L1252.6 250.8M1291.0 276.1L1294.5 279.1M1226.6 272.4L1229.6 274.4M1225.8 288.8L1228.6 290.7M1265.6 227.2L1273.3 232.2M1253.5 303.4L1257.2 298.7M1288.6 221.3L1295.7 213.5M1232.8 254.1L1235.1 251.1M1220.8 292.0L1226.3 285.5M1227.9 298.0L1230.2 294.3M1313.4 235.7L1321.3 242.0M1254.4 260.9L1259.6 253.6M1283.7 217.7L1287.7 220.1M1264.9 298.3L1270.6 292.7M1225.5 280.4L1231.6 285.9M1318.2 217.8L1325.4 210.0M1229.3 298.7L1233.2 302.4M1286.4 233.0L1290.4 235.6M1312.5 215.6L1318.6 209.2M1239.2 302.7L1244.4 295.7M1295.4 188.4L1302.4 181.2M1191.0 317.2L1197.5 310.0M1257.1 242.3L1261.7 245.9M1286.0 252.2L1289.8 246.6M1243.8 297.2L1248.1 290.4M1224.7 308.5L1231.6 300.0M1352.4 208.3L1357.4 211.5M1189.2 313.1L1193.8 307.1M1207.9 309.0L1212.1 302.1M1262.2 288.1L1264.9 284.9M1275.0 296.1L1279.6 289.4M1338.4 192.3L1341.2 194.2M1248.4 263.0L1252.2 266.1M1195.5 288.2L1203.4 293.7M1305.2 190.3L1312.4 195.3M1219.6 300.2L1221.4 297.8M1271.9 234.7L1275.5 237.9M1336.7 230.6L1339.0 227.0M1259.0 239.6L1263.5 242.3M1267.3 247.5L1270.5 243.7M1309.3 228.4L1313.3 223.0M1258.1 254.0L1263.3 248.0M1299.5 271.2L1304.3 265.1M1298.1 228.7L1302.1 224.0M1260.0 248.1L1262.4 250.1M1272.3 290.0L1277.4 294.5M1282.7 288.9L1290.7 293.9M1338.4 216.8L1346.0 220.8M1183.5 313.0L1185.6 310.4M1262.1 287.6L1267.1 279.0M1305.0 270.2L1307.4 267.1M1349.8 208.0L1354.3 203.3M1287.9 276.7L1295.1 269.4M1320.3 234.6L1327.5 239.8M1285.1 227.6L1290.8 218.2M1278.8 222.5L1283.1 226.3M1275.7 252.7L1283.8 260.1M1261.2 301.4L1266.2 293.8M1279.8 243.0L1284.8 235.2M1185.5 301.0L1193.1 306.7M1329.3 222.4L1332.7 218.4M1290.1 214.0L1298.4 220.6M1309.7 195.0L1318.8 200.9M1270.3 288.6L1276.3 280.9M1334.7 215.9L1336.6 213.4M1339.2 207.1L1342.1 209.3M1221.2 302.1L1227.0 296.4M1328.7 219.0L1334.9 210.5M1258.7 290.4L1261.5 292.4M1293.6 245.5L1296.9 248.3M1298.1 261.6L1304.7 253.6M1278.6 205.5L1282.5 200.1M1235.6 286.9L1243.6 293.6M1295.5 200.7L1299.9 203.9M1356.1 214.3L1359.0 210.5M1297.2 285.2L1303.4 276.4M1266.9 229.7L1269.5 225.9M1201.0 299.8L1203.3 296.5M1279.8 282.6L1284.3 286.7M1282.0 282.4L1286.5 274.7M1234.7 277.2L1242.3 269.4M1287.7 274.4L1291.3 269.8M1191.5 309.6L1194.8 312.1M1280.4 296.5L1285.0 290.6M1256.9 287.8L1259.2 284.5M1340.4 231.8L1345.6 226.0M1249.0 249.7L1253.7 242.8M1294.1 237.6L1303.2 242.3M1294.1 246.5L1303.2 251.6M1325.3 248.5L1329.0 243.2M1320.5 186.3L1324.3 189.2M1351.5 218.1L1355.5 213.7M1305.7 216.4L1308.3 218.0M1195.8 306.5L1199.1 301.4M1259.0 223.7L1264.8 228.3M1294.1 198.9L1299.1 192.2M1218.2 287.0L1224.1 291.1M1263.5 228.7L1271.3 234.3M1226.5 273.6L1233.5 278.8M1235.3 270.1L1240.2 274.3M1309.6 212.4L1313.4 215.8M1171.5 315.5L1175.1 318.7M1261.6 229.5L1264.1 231.8M1303.8 231.7L1310.5 224.6M1230.7 302.8L1233.5 299.2M1317.5 233.6L1320.3 229.3M1305.9 205.7L1309.8 208.2M1277.7 226.5L1282.2 221.0M1332.1 188.8L1336.3 191.0M1236.5 310.9L1240.2 305.8M1293.2 236.4L1297.8 240.4M1325.0 215.2L1327.6 216.9M1294.0 247.7L1300.7 240.6M1271.6 236.5L1277.9 230.0M1338.2 221.0L1341.0 223.2M1342.8 206.4L1347.0 200.8M1222.3 277.6L1225.3 280.7M1264.4 246.6L1270.2 251.0M1274.1 220.1L1279.7 213.4M1329.4 227.7L1336.2 232.6M1169.6 306.6L1173.1 309.0M1295.0 272.4L1299.4 275.0M1198.7 281.7L1202.9 277.4M1297.1 272.8L1305.1 277.8M1292.6 195.6L1298.0 189.0M1249.3 295.2L1257.6 300.5M1205.3 306.5L1208.4 309.1M1239.0 310.9L1241.5 307.9M1320.5 221.1L1326.4 214.5M1250.4 290.2L1256.4 294.0M1232.9 287.5L1237.6 279.6M1355.8 205.9L1359.8 208.9M1282.4 298.6L1284.8 300.5M1321.5 216.8L1326.5 210.9M1287.0 199.0L1293.1 191.2M1326.3 242.1L1328.2 238.8M1245.4 254.3L1250.4 247.9M1329.4 198.3L1335.2 202.3M1347.1 208.9L1352.6 202.8M1288.9 265.7L1292.9 261.2M1290.6 281.4L1296.3 273.8M1215.2 296.8L1219.2 299.9M1238.8 293.8L1241.2 289.7M1314.1 239.5L1317.5 234.1M1268.7 285.5L1273.9 289.0M1278.3 215.0L1281.6 210.0M1223.3 279.1L1228.6 282.3M1240.3 280.7L1243.7 282.9M1295.8 216.5L1301.8 220.8M1324.0 195.6L1327.7 191.7M1304.3 268.2L1306.8 265.1M1255.4 246.2L1261.0 249.5M1227.7 274.8L1232.7 267.3M1335.4 204.4L1342.2 208.4M1234.7 268.8L1241.3 260.7M1342.4 212.8L1344.4 210.2M1314.8 194.5L1319.1 188.9M1237.4 295.0L1239.6 291.4M1326.3 235.8L1330.6 239.3M1294.7 222.7L1297.3 219.9M1280.5 280.2L1284.5 283.6M1273.2 272.9L1277.1 266.9M1226.9 296.2L1231.5 300.1M1245.0 304.5L1251.0 309.4M1189.4 299.0L1194.8 290.7M1284.5 203.2L1291.7 207.0M1223.4 296.7L1228.6 290.4M1298.6 203.1L1304.7 207.6M1257.0 298.1L1259.9 300.2M1317.6 242.7L1326.0 249.5M1340.8 205.3L1343.3 201.9M1276.1 205.2L1281.2 210.2M1356.0 221.4L1359.5 216.4M1333.5 235.9L1339.2 227.1M1281.6 247.0L1285.7 241.3M1189.0 303.4L1193.9 297.5M1228.4 276.4L1236.5 283.2M1316.7 239.8L1323.1 243.7M1303.5 205.7L1308.1 209.0M1253.4 293.7L1255.8 291.2M1171.9 307.2L1174.0 304.1M1231.4 272.1L1235.9 265.3M1264.8 226.3L1267.8 221.5M1279.4 264.3L1284.9 258.5M1263.3 256.1L1267.1 251.2M1229.8 258.9L1234.6 253.1M1255.1 259.9L1259.6 254.8M1290.5 253.5L1292.8 255.6M1228.3 306.4L1231.6 302.7M1343.5 199.1L1348.5 202.5M1209.9 278.2L1213.0 280.9M1269.3 294.4L1272.2 291.3M1331.2 236.2L1333.3 233.3M1253.4 283.5L1261.2 289.1M1323.5 214.5L1329.1 205.9M1214.9 310.7L1220.5 304.8M1228.8 301.7L1234.0 295.0M1276.7 215.6L1280.1 218.4M1285.2 234.5L1290.4 227.6M1297.3 192.8L1301.4 196.4M1317.5 246.3L1319.9 243.4M1211.9 289.3L1217.1 294.3M1302.9 198.1L1306.0 192.6M1259.2 234.6L1263.7 229.8M1276.0 300.7L1280.8 304.4M1211.0 280.7L1213.9 277.3M1231.5 273.3L1237.2 267.3M1263.3 303.7L1266.0 305.4M1301.2 280.8L1307.1 271.8M1246.0 259.2L1250.9 262.5M1264.7 258.8L1273.2 264.9M1294.5 263.2L1299.4 256.8M1265.9 275.5L1269.0 271.0M1264.0 221.7L1265.9 219.0M1300.8 231.0L1304.1 233.5M1229.3 304.5L1232.4 300.3M1325.9 241.5L1328.8 244.3M1239.7 265.3L1245.1 269.0M1306.4 219.4L1310.2 222.2M1273.3 242.7L1281.2 250.2M1286.8 269.0L1295.0 273.4M1272.5 284.9L1277.8 289.0M1340.0 226.4L1343.5 222.3M1299.0 194.4L1305.5 199.1M1329.6 215.9L1337.0 220.8M1232.8 286.7L1238.1 279.6M1216.8 302.9L1223.2 308.5M1346.6 228.9L1349.4 224.9M1267.3 293.8L1273.4 285.5M1258.9 226.9L1262.0 222.8M1301.3 210.1L1303.8 212.2M1301.7 209.8L1307.7 213.3M1293.3 201.8L1302.3 207.9M1202.2 282.9L1205.4 278.0M1259.5 254.4L1265.2 248.8M1279.6 227.6L1283.5 223.5M1340.0 208.6L1344.3 203.5M1355.7 211.2L1358.2 207.8M1290.5 233.1L1295.9 225.9M1173.3 315.5L1177.5 310.3M1280.0 205.6L1282.6 202.9M1281.6 293.4L1286.2 297.7M1273.6 250.8L1282.7 256.8M1310.1 210.7L1314.7 204.1M1295.1 213.4L1304.1 218.8M1186.2 317.5L1188.7 314.2M1317.3 203.9L1319.8 200.7M1184.5 302.5L1187.9 299.2M1222.6 280.9L1229.9 285.3M1255.3 249.2L1261.0 241.5M1317.3 254.9L1323.1 249.1M1293.3 260.9L1298.6 264.4M1284.4 239.0L1289.0 243.1M1252.1 261.0L1258.3 265.2M1341.6 208.4L1349.6 213.8M1200.4 292.4L1206.7 296.8M1295.6 249.0L1300.1 242.7M1231.1 258.1L1237.5 262.6M1308.1 188.9L1311.6 183.7M1287.1 267.6L1291.9 272.1M1222.9 277.6L1226.2 280.4M1241.2 291.8L1248.0 283.4M1291.5 200.5L1295.9 204.5M1337.8 227.2L1344.3 231.3M1296.8 282.2L1303.4 274.6M1293.5 196.5L1297.5 190.2M1269.1 292.0L1278.8 296.8M1214.5 304.1L1220.0 296.7M1305.2 223.0L1308.2 225.1M1285.5 229.9L1289.3 225.7M1267.4 221.1L1269.4 218.6M1236.4 255.1L1242.1 248.4M1317.0 192.3L1324.4 198.9M1196.2 308.9L1199.7 304.8M1237.1 289.6L1242.1 294.0M1311.3 193.7L1316.3 187.5M1350.7 218.5L1355.8 210.9M1299.4 227.5L1307.1 234.4M1255.1 274.2L1258.4 269.7M1265.3 289.0L1270.4 282.1M1244.7 301.1L1247.9 303.7M1178.1 306.5L1183.4 300.2M1346.9 220.9L1351.6 215.1M1181.2 315.0L1188.0 306.9M1252.7 268.9L1255.0 266.4M1318.0 202.0L1322.2 196.1M1273.9 295.1L1279.8 287.0M1300.5 241.4L1302.6 243.6M1261.3 303.5L1265.1 297.9M1328.7 236.1L1330.9 233.5M1275.9 221.1L1282.1 226.4M1251.3 253.4L1257.4 257.4M1271.6 246.6L1274.4 248.9M1352.9 207.4L1358.1 210.8M1304.9 243.6L1309.9 247.3M1182.1 312.0L1190.1 317.8M1325.6 250.4L1329.2 245.6M1284.7 263.0L1289.5 266.2M1232.1 267.6L1239.1 260.3M1228.0 278.8L1235.7 284.0M1268.8 276.2L1274.9 280.4M1303.2 229.5L1309.9 235.7M1270.8 251.6L1280.0 256.3M1200.0 279.2L1204.1 283.1M1330.8 209.7L1336.9 202.0M1327.4 230.1L1331.7 223.7M1339.2 203.4L1341.4 201.1M1331.9 225.4L1334.8 221.5M1300.2 190.6L1306.8 194.4M1320.4 249.2L1326.2 241.8M1286.3 240.8L1294.3 244.9M1296.2 234.2L1301.1 227.4M1346.1 222.8L1353.5 214.7M1272.6 221.9L1280.3 227.5M1264.2 251.2L1267.7 246.6M1287.2 202.9L1295.5 209.7M1233.1 264.3L1241.5 270.1M1233.9 302.3L1240.0 295.8M1301.9 201.5L1307.3 193.4M1303.7 241.2L1311.1 247.8M1317.3 186.5L1319.8 188.3M1298.6 269.7L1305.1 261.1M1276.2 204.7L1281.1 197.1M1262.6 281.3L1266.4 277.0M1244.1 282.7L1252.3 288.0M1309.9 262.7L1313.9 258.1M1270.8 250.7L1276.0 244.7M1204.8 280.2L1210.0 284.0M1291.4 225.0L1294.9 227.6M1269.8 244.1L1276.4 250.0M1272.2 285.3L1274.9 281.3M1295.1 197.7L1297.5 194.1M1269.6 227.4L1277.5 232.8M1262.9 219.5L1269.7 224.1M1292.5 202.8L1300.2 207.8M1205.1 304.1L1207.5 300.2M1333.6 202.4L1340.0 194.9M1313.6 209.2L1316.2 205.6M1302.3 224.6L1304.7 222.1M1297.8 263.1L1301.1 258.1M1308.1 261.9L1313.1 256.6M1304.8 273.1L1311.0 266.6M1318.6 211.6L1322.6 206.5M1322.9 214.3L1325.6 216.2M1260.5 247.5L1269.0 252.0M1179.2 303.9L1184.1 306.9M1263.3 256.8L1267.2 251.4M1225.7 282.4L1233.7 287.7M1340.8 206.2L1349.2 212.9M1250.8 263.7L1255.8 257.7M1328.5 227.1L1331.2 224.0M1342.4 223.9L1345.5 219.6M1308.9 253.8L1317.1 259.5M1299.8 218.3L1305.4 209.9M1232.7 293.2L1241.6 297.8M1235.1 298.8L1243.7 303.2M1302.5 204.9L1305.9 207.4M1258.7 248.6L1264.0 241.6M1305.9 207.4L1313.7 214.6M1335.2 198.4L1341.6 203.2M1204.3 288.6L1211.9 294.5M1215.4 288.2L1219.3 282.3M1255.1 254.4L1258.2 250.2M1208.5 303.3L1213.2 306.2M1325.4 198.6L1330.9 191.5M1329.9 189.1L1332.9 191.8M1335.0 193.4L1338.9 196.4M1192.0 290.1L1194.5 287.5M1276.2 267.4L1278.8 263.6M1248.5 252.7L1251.1 248.7M1292.8 192.0L1297.9 184.8M1297.7 247.5L1303.0 241.3M1227.2 263.0L1230.2 265.3M1170.5 305.9L1174.8 300.4M1348.9 216.1L1353.9 209.9M1169.4 303.7L1174.7 307.5M1299.7 199.0L1302.7 201.3M1256.0 293.5L1258.8 289.3M1257.7 251.3L1260.6 253.2M1273.1 227.8L1276.0 230.1M1282.5 274.7L1286.1 269.1M1196.2 284.2L1202.3 275.5M1244.9 278.2L1251.0 272.0M1314.3 250.3L1319.5 242.8M1259.0 301.1L1266.1 306.0M1287.2 245.8L1290.9 248.4M1302.1 194.5L1305.3 196.7M1296.1 229.0L1303.5 236.2M1291.5 197.3L1299.5 202.4M1291.1 262.2L1298.8 267.8M1236.7 255.5L1242.5 260.0M1286.9 276.5L1292.5 280.8M1177.8 313.7L1183.1 317.2M1284.6 251.6L1288.6 255.6M1292.9 274.1L1295.7 270.5M1306.3 253.1L1310.8 246.4M1308.9 196.5L1315.6 203.0M1273.4 298.3L1275.8 295.7M1257.0 282.2L1266.2 288.0M1240.7 299.5L1245.9 303.4M1320.9 243.9L1327.1 235.7M1304.1 222.5L1310.1 226.4M1345.0 202.6L1351.9 207.4M1288.9 222.8L1295.0 227.1M1306.7 274.1L1309.7 269.7M1258.5 230.9L1264.8 224.5M1210.3 297.4L1215.5 301.6M1313.5 191.5L1317.6 186.6M1282.4 269.7L1290.5 275.3M1340.6 219.5L1349.0 224.8M1175.5 302.2L1183.7 309.1M1286.3 243.8L1291.2 237.0M1279.9 287.7L1282.9 289.7M1329.1 198.3L1332.6 200.7M1293.8 230.7L1296.6 232.6M1268.9 226.4L1278.4 231.8M1302.7 185.7L1307.9 178.8M1294.9 289.7L1297.7 286.1M1293.9 256.7L1299.5 249.2M1350.8 223.9L1356.9 215.8M1281.3 218.8L1288.6 211.1M1229.6 293.9L1237.2 299.4M1254.1 237.3L1258.5 231.5M1235.6 286.4L1239.8 281.1M1245.7 279.9L1250.1 274.9M1288.6 189.5L1291.9 191.4M1198.9 283.2L1207.0 288.8M1263.9 280.3L1272.2 285.2M1243.6 307.0L1247.2 302.3M1295.5 251.1L1298.8 246.3M1320.7 220.3L1322.8 217.5M1322.3 244.5L1327.9 238.9M1170.5 313.9L1178.0 318.2M1217.3 277.4L1220.3 279.4M1256.3 231.5L1262.9 223.0M1330.3 204.5L1335.4 199.0M1226.7 285.9L1234.7 291.5M1262.7 265.6L1270.8 272.4M1194.1 293.8L1198.4 297.5M1259.2 247.9L1262.2 244.8M1256.9 269.0L1260.3 265.1M1261.4 272.3L1267.2 276.9M1322.4 217.2L1328.0 210.9M1295.7 233.2L1301.9 237.1M1290.6 205.1L1294.3 201.2M1263.7 237.2L1272.7 243.2M1229.4 286.7L1232.3 282.7M1190.5 309.9L1196.0 302.9M1267.8 248.2L1276.8 254.6M1314.5 196.7L1318.0 191.9M1306.8 233.0L1312.3 224.6M1210.9 283.1L1217.6 275.9M1257.5 278.7L1262.4 273.6M1345.1 200.5L1351.9 193.1M1280.7 261.5L1287.4 266.3M1224.7 297.9L1227.1 294.8M1280.1 240.6L1283.8 236.7M1257.7 232.1L1266.8 238.1M1310.0 255.2L1315.8 259.3M1267.2 306.6L1271.4 300.9M1277.4 258.1L1285.9 264.5M1249.6 287.8L1252.8 282.9M1322.0 234.6L1329.1 240.2M1264.4 228.3L1267.2 230.3M1294.3 207.8L1298.4 211.6M1302.8 199.5L1304.9 196.8M1240.9 295.4L1242.9 293.1M1221.4 309.5L1225.3 303.2M1309.5 201.3L1311.4 198.6M1290.2 282.0L1295.4 274.2M1292.9 250.6L1296.5 253.4M1207.7 274.5L1210.8 277.0M1265.4 289.6L1271.3 281.1M1304.4 250.9L1306.7 247.8M1275.6 232.9L1282.6 238.7M1277.5 288.1L1280.4 285.1M1346.2 211.7L1354.3 219.3M1246.7 277.0L1251.9 271.4M1313.7 254.9L1317.1 257.6M1336.1 195.0L1341.3 200.3M1190.3 297.4L1195.5 292.0M1279.7 282.3L1282.0 279.5M1281.6 258.7L1284.1 255.8M1270.1 226.4L1276.0 231.5M1268.9 234.8L1272.1 229.2M1264.6 289.1L1268.3 284.3M1304.9 204.8L1308.9 207.0M1336.5 187.4L1342.1 193.0M1252.7 305.0L1257.3 298.2M1242.9 256.5L1246.8 250.0M1274.7 288.2L1283.3 293.3M1274.7 226.5L1281.1 218.0M1214.5 287.9L1222.3 280.2M1279.5 278.3L1285.6 269.3M1283.9 208.6L1288.7 211.6M1321.9 195.7L1326.6 188.5M1244.8 246.3L1249.1 250.0M1245.6 294.7L1252.8 298.4M1280.7 284.0L1288.4 287.9M1235.6 267.6L1238.7 263.5M1227.1 262.8L1231.1 265.5M1225.7 303.6L1230.0 297.3M1315.8 215.1L1320.0 210.3M1248.2 302.1L1250.6 298.7M1347.0 226.0L1349.6 228.4M1284.9 284.5L1287.8 286.6M1312.0 244.3L1314.1 241.0M1235.0 278.6L1239.6 271.2M1304.9 273.0L1307.5 269.9M1292.4 196.3L1300.0 201.3M1183.4 305.2L1187.0 306.9M1263.4 259.1L1270.3 251.5M1314.1 232.7L1316.8 234.9M1269.7 256.8L1276.2 262.5M1238.8 286.8L1245.1 291.5M1241.4 262.0L1244.1 258.2M1338.0 225.4L1341.3 220.7M1290.1 199.8L1299.3 204.6M1296.3 236.2L1300.9 239.1M1240.4 273.9L1245.1 267.1M1253.1 241.9L1256.2 244.3M1240.5 265.4L1247.1 269.1M1236.0 286.1L1240.9 279.6M1322.1 225.3L1324.3 222.2M1301.0 217.0L1308.6 222.7M1241.8 290.1L1246.6 294.3M1256.9 305.2L1261.5 297.8M1328.1 226.0L1335.2 232.5M1269.9 235.5L1273.1 231.1M1316.7 203.7L1322.8 195.2M1297.2 251.1L1301.4 244.8M1238.7 278.8L1242.9 271.3M1309.6 188.9L1316.8 196.0M1277.8 285.8L1280.4 288.2M1304.2 205.7L1313.4 211.4M1247.4 244.4L1255.1 251.1M1199.1 292.9L1204.5 285.6M1290.9 221.9L1298.7 227.0M1263.1 271.8L1264.9 269.4M1339.6 236.7L1344.5 229.4M1327.7 234.1L1333.3 225.3M1295.6 206.2L1300.5 200.6M1291.1 222.6L1295.3 218.3M1212.8 298.7L1219.6 303.4M1303.6 220.0L1307.1 215.6M1217.0 283.1L1220.1 286.3M1291.1 208.4L1295.9 202.4M1299.1 261.5L1304.3 252.1M1285.1 233.7L1291.1 238.7M1246.5 262.3L1249.5 258.7M1319.2 217.6L1327.2 224.4M1237.6 267.6L1242.9 272.6M1329.0 220.5L1337.5 226.4M1299.6 204.3L1305.9 196.0M1170.7 311.4L1176.7 315.2M1292.9 252.8L1298.9 245.6M1269.7 225.1L1274.5 229.0M1320.5 203.3L1323.9 205.1M1282.1 210.9L1286.2 213.7M1258.6 255.0L1265.4 262.0M1348.9 215.0L1356.2 220.1M1287.2 252.0L1292.5 244.5M1301.4 256.6L1306.0 249.9M1261.6 305.1L1268.4 308.9M1174.2 311.7L1179.0 315.1M1315.3 197.8L1322.6 190.1M1312.9 245.4L1316.6 241.2M1268.2 259.3L1276.6 265.5M1324.2 193.4L1329.8 186.5M1309.6 271.9L1315.2 263.2M1299.2 236.7L1304.6 228.4M1230.0 247.8L1237.7 253.5M1321.7 190.2L1329.5 197.1M1350.2 193.9L1358.9 200.6M1281.6 261.1L1288.3 253.9M1251.2 253.4L1254.3 249.4M1191.1 310.0L1198.0 314.6M1264.5 282.2L1273.1 288.3M1271.9 224.2L1280.8 230.3M1296.7 191.9L1299.3 189.2M1245.0 261.9L1249.3 265.1M1310.3 245.7L1317.6 238.2M1202.7 290.9L1208.4 282.4M1258.9 298.5L1261.1 295.5M1236.8 277.1L1243.5 281.8M1270.9 229.8L1276.9 221.1M1292.1 207.6L1294.8 204.0M1258.3 296.8L1263.1 300.6M1243.7 252.8L1248.5 244.5M1314.3 204.0L1318.4 207.0M1227.4 285.2L1232.9 278.5M1260.0 237.4L1265.7 230.4M1265.0 223.5L1268.5 218.7M1301.5 201.7L1305.6 204.6M1236.2 266.2L1242.3 258.6M1227.4 285.9L1231.1 288.0M1275.3 289.0L1280.2 282.0M1321.9 212.3L1329.2 218.9M1290.1 271.6L1296.2 276.3M1323.1 240.4L1327.4 234.6M1276.5 270.6L1281.5 263.9M1237.5 278.7L1244.9 271.0M1314.4 214.7L1319.5 219.9M1242.5 278.9L1251.0 283.3M1278.2 206.7L1281.7 209.3M1279.4 200.4L1286.1 205.9M1314.8 217.5L1318.1 212.8M1278.1 211.9L1280.0 209.2M1209.6 292.2L1216.3 296.7M1339.6 224.8L1341.7 221.9M1276.4 281.4L1279.7 284.2M1231.6 275.8L1237.2 279.3M1260.6 242.2L1266.9 234.0M1323.2 212.5L1328.7 215.9M1311.9 246.9L1316.3 240.8M1251.8 243.8L1255.2 238.4M1341.5 230.1L1346.5 223.9M1253.3 307.5L1255.5 304.7M1234.6 299.4L1240.0 292.4M1233.6 259.4L1236.3 255.3M1262.9 250.3L1269.0 255.8M1249.7 240.3L1253.0 243.1M1303.3 233.8L1309.0 227.4M1251.0 251.7L1253.8 247.9M1234.1 270.2L1236.1 267.7M1285.4 230.1L1287.6 226.8M1256.1 244.3L1262.0 238.0M1258.3 285.6L1264.2 289.0M1275.5 205.7L1283.9 212.7M1321.9 214.2L1329.5 219.7M1283.9 241.1L1287.5 236.6M1263.1 246.8L1265.7 244.2M1254.9 296.6L1260.9 300.7M1302.7 204.5L1308.1 197.6M1306.5 234.4L1310.6 229.6M1256.8 283.2L1260.8 278.9M1304.8 207.0L1311.3 211.2M1205.3 283.8L1207.2 281.0M1305.0 259.6L1310.5 253.5M1302.1 278.0L1308.4 269.8M1262.1 250.3L1265.5 246.2M1248.2 304.9L1256.4 310.1M1210.6 280.7L1215.2 284.3M1301.1 230.1L1303.8 231.9M1251.5 283.2L1255.5 286.3M1240.5 282.4L1248.2 290.2M1264.2 254.9L1268.2 249.6M1270.7 269.6L1275.4 273.0M1230.3 284.8L1234.9 278.8M1302.0 236.3L1306.1 231.1M1303.2 241.9L1309.0 245.5M1303.1 189.2L1307.8 183.7M1307.6 245.8L1314.0 238.3M1249.3 287.0L1255.2 290.9M1232.8 252.2L1241.5 258.1M1210.7 286.5L1218.4 293.0M1226.4 298.5L1229.4 295.2M1289.4 233.6L1293.9 237.5M1280.9 196.6L1284.8 199.5M1295.0 200.0L1300.9 194.1M1206.6 287.9L1211.6 279.3M1272.1 269.8L1280.2 276.4M1212.2 285.4L1215.0 281.7M1242.9 251.3L1248.4 243.1M1244.0 301.0L1251.7 307.9M1272.0 233.9L1276.5 227.4M1317.2 206.0L1321.7 201.3M1192.9 277.4L1195.7 279.3M1332.3 239.3L1336.5 234.4M1195.4 306.1L1198.4 302.2M1305.9 259.4L1309.5 254.1M1334.7 222.2L1341.7 214.5M1328.0 220.2L1333.8 224.2M1308.0 195.4L1312.3 188.5M1199.3 290.1L1202.5 292.7M1276.9 223.3L1281.4 216.4M1292.1 240.5L1296.7 234.3M1280.0 222.6L1282.1 220.0M1280.1 264.9L1287.0 271.0M1187.3 307.0L1191.9 301.2M1259.1 283.6L1263.7 278.1M1270.6 287.6L1275.9 291.3M1286.3 277.9L1289.0 274.8M1266.9 287.4L1271.8 291.4M1313.4 233.7L1316.7 230.5M1241.7 303.0L1247.7 307.9M1203.6 280.6L1206.0 277.4M1283.1 227.1L1285.0 224.8M1334.9 187.5L1340.3 191.6M1175.9 298.9L1185.0 303.6M1344.0 231.8L1349.3 224.3M1344.8 211.8L1350.0 204.1M1235.8 260.4L1244.1 266.2M1299.3 220.0L1301.5 217.0M1271.9 296.7L1275.4 291.5M1260.0 247.2L1267.2 239.7M1272.5 239.1L1275.1 235.1M1251.4 252.9L1259.9 259.5M1315.8 205.4L1322.1 210.1M1274.9 223.3L1281.1 229.0M1298.4 234.9L1301.0 230.9M1268.8 259.9L1272.1 253.9M1293.3 269.3L1300.3 274.3M1181.3 309.3L1186.6 313.4M1288.1 238.2L1291.1 240.8M1273.5 217.4L1276.2 213.4M1239.5 298.2L1246.2 303.3M1339.0 188.5L1346.6 194.1M1246.9 260.0L1249.6 256.1M1264.9 297.3L1266.7 294.7M1279.9 225.3L1284.8 228.2M1287.5 247.1L1292.7 240.6M1259.7 246.8L1263.8 250.4M1258.2 263.8L1264.7 257.1M1350.2 194.7L1355.1 199.1M1292.5 290.6L1295.5 285.9M1269.8 212.8L1273.1 207.6M1279.6 236.3L1283.1 238.6M1228.7 268.0L1236.6 274.1M1210.7 310.9L1214.8 306.5M1264.4 221.4L1269.0 226.0M1275.5 252.9L1278.2 248.4M1206.6 294.3L1212.3 285.7M1263.0 283.7L1269.0 287.5M1191.0 303.4L1195.0 306.2M1212.9 283.8L1216.8 286.0M1342.7 212.5L1348.7 205.6M1248.5 286.3L1256.4 291.7M1217.0 292.1L1224.1 297.6M1200.7 296.7L1206.0 290.8M1254.4 260.4L1261.9 265.4M1242.0 288.2L1248.8 294.0M1340.6 214.4L1346.6 220.1M1279.7 210.6L1288.5 215.7M1288.6 228.5L1290.9 224.6M1321.0 205.4L1328.3 210.8M1247.1 305.5L1251.0 300.0M1299.8 216.2L1303.3 211.0M1254.5 232.8L1259.8 236.9M1271.7 247.2L1278.8 253.2M1287.1 296.8L1291.2 292.1M1256.5 267.5L1258.8 264.3M1301.7 251.4L1308.4 255.6M1209.6 284.5L1213.3 278.9M1286.4 214.3L1293.7 221.5M1324.6 194.7L1327.9 190.5M1283.0 199.7L1287.0 194.3M1203.1 305.6L1205.1 302.9M1287.9 242.7L1290.1 240.3M1237.5 282.6L1244.8 274.5M1250.3 243.4L1255.6 235.9M1252.0 303.9L1259.2 308.2M1237.6 271.7L1242.6 266.8M1296.2 219.9L1298.3 216.9M1293.0 216.1L1299.0 220.8M1272.7 225.9L1277.3 230.2M1253.2 282.8L1256.6 278.5M1182.7 313.0L1189.7 305.3M1306.7 229.1L1310.5 223.9M1197.4 305.2L1203.8 311.3M1298.3 199.4L1303.2 191.5M1342.0 187.9L1350.6 194.1M1287.6 282.4L1290.2 284.8M1282.5 233.0L1285.9 235.6M1276.1 290.0L1283.3 295.0M1230.2 269.5L1237.8 275.0M1279.3 215.5L1282.7 210.1M1285.6 264.8L1292.6 269.5M1290.1 194.7L1296.2 199.2M1277.1 207.7L1283.1 199.5M1299.3 192.1L1305.6 183.2M1190.7 310.9L1195.1 305.1M1323.2 211.0L1330.4 217.1M1259.1 231.9L1267.5 236.9M1297.1 204.1L1301.9 196.5M1301.5 244.3L1306.1 248.8M1267.7 226.1L1272.6 229.3M1263.2 302.0L1267.8 296.7M1181.6 309.5L1185.1 312.3M1340.7 200.4L1345.2 195.6M1280.2 224.2L1282.8 226.6M1301.4 195.1L1309.2 199.6M1268.2 270.0L1271.0 271.9M1350.8 220.7L1355.8 214.4M1305.7 260.4L1307.8 262.5M1267.6 252.5L1274.5 258.6M1321.7 195.9L1325.8 189.7M1354.7 209.2L1357.7 212.0M1312.2 215.2L1314.9 211.6M1246.2 301.3L1253.1 306.9M1275.0 255.6L1281.9 247.2M1198.3 305.6L1206.3 310.0M1260.2 248.3L1263.7 251.8M1344.8 217.5L1350.9 223.5M1212.0 302.0L1216.0 297.2M1230.4 284.1L1235.7 287.8M1220.1 306.3L1224.1 301.1M1233.6 276.1L1238.8 270.2M1193.0 299.5L1195.9 295.7M1303.7 224.2L1312.8 228.8M1201.8 308.6L1204.4 304.6M1194.7 309.7L1199.4 303.2M1214.3 279.6L1220.2 284.8M1184.8 305.7L1190.2 300.3M1281.9 264.7L1285.9 259.0M1282.5 212.8L1287.7 216.7M1298.5 212.7L1304.3 205.5M1326.6 213.8L1333.0 218.2M1267.3 214.0L1273.0 217.3M1294.9 279.6L1297.7 276.6M1270.5 293.5L1274.9 296.5M1226.8 262.4L1231.2 266.1M1320.8 247.1L1326.9 239.0M1248.6 299.3L1252.0 295.1M1176.6 311.6L1181.1 315.2M1288.4 222.5L1291.4 219.4M1326.7 215.6L1332.9 208.7M1281.8 270.4L1284.5 267.2M1337.1 218.6L1342.5 211.9M1347.3 214.5L1352.3 218.2M1329.3 200.9L1335.1 192.4M1213.0 287.4L1217.1 290.6M1284.2 213.3L1287.9 215.8M1267.5 240.7L1275.9 246.4M1274.6 244.6L1278.9 238.1M1291.3 239.5L1295.8 232.9M1303.6 200.5L1310.5 192.4M1231.6 254.2L1236.7 247.5M1298.3 227.9L1303.6 231.9M1299.6 215.1L1302.4 211.9M1338.4 214.9L1344.4 218.0M1191.2 305.7L1196.4 310.9M1193.4 290.6L1198.5 294.1M1235.2 288.0L1240.7 292.8M1285.1 203.9L1290.9 207.9M1339.7 210.4L1342.9 212.2M1294.2 219.6L1297.0 215.8M1270.8 267.9L1274.3 264.4M1356.1 218.6L1359.4 214.9M1326.3 244.7L1333.4 237.3M1250.9 275.4L1257.0 279.2M1297.4 255.4L1302.4 258.8M1271.8 216.6L1275.3 212.9M1343.9 211.9L1348.6 205.5M1322.2 229.5L1331.4 235.4M1276.0 286.0L1279.8 288.4M1241.2 280.4L1244.7 282.6M1219.7 309.7L1222.7 305.2M1292.8 273.1L1297.3 277.3M1284.8 207.8L1288.2 203.6M1314.1 223.7L1320.3 228.3M1280.9 199.3L1286.5 202.9M1345.5 188.5L1354.8 193.6M1199.7 297.5L1202.8 293.6M1271.2 297.5L1278.3 303.6M1294.8 204.0L1298.1 199.4M1223.7 303.3L1227.3 305.6M1292.4 272.5L1296.9 276.0M1282.3 254.7L1285.2 251.0M1256.5 256.2L1262.1 260.3M1203.1 296.8L1207.2 292.0M1299.2 244.5L1304.5 237.7M1274.9 306.4L1277.4 302.7M1338.8 216.8L1345.5 220.8M1275.8 253.7L1279.5 256.4M1194.5 284.6L1202.6 289.7M1183.4 306.7L1186.5 303.1M1269.5 282.5L1273.5 278.1M1172.8 305.8L1180.2 312.5M1276.0 306.6L1277.8 303.9M1352.0 212.9L1357.9 204.7M1188.9 302.8L1193.4 296.5M1331.6 211.3L1335.6 214.2M1236.1 260.1L1240.6 263.4M1338.8 221.0L1346.0 224.7M1294.7 237.6L1300.7 229.0M1305.3 226.6L1314.3 233.0M1286.7 217.4L1290.2 213.0M1322.6 212.1L1327.4 215.5M1238.3 290.3L1244.7 295.7M1314.3 233.2L1316.6 235.5M1280.5 258.7L1287.5 263.9M1242.3 302.9L1248.6 295.7M1228.9 260.2L1234.3 253.4M1316.2 219.3L1321.8 210.4M1198.1 303.8L1202.6 297.8M1266.0 310.0L1268.1 307.1M1308.1 264.8L1312.5 258.9M1258.9 230.4L1264.8 224.2M1276.2 268.0L1282.7 260.1M1249.2 255.6L1253.4 251.1M1303.5 243.9L1306.5 245.8M1251.8 236.1L1258.0 229.4M1289.7 198.8L1294.8 192.6M1314.2 231.0L1321.0 223.2M1246.2 252.5L1255.0 258.5M1188.4 307.1L1194.0 300.8M1216.8 299.1L1218.8 296.5M1213.7 307.0L1217.4 301.7M1238.0 270.8L1244.0 263.7M1238.1 282.1L1241.3 283.8M1271.6 252.1L1275.2 254.5M1316.3 225.7L1320.3 219.7M1188.5 302.6L1197.9 308.2M1340.4 203.2L1349.3 209.3M1300.5 185.3L1305.6 179.0M1198.0 279.4L1199.9 276.6M1310.0 207.8L1316.7 212.4M1303.7 216.9L1305.7 214.5M1330.0 229.1L1338.1 235.5M1248.5 259.5L1252.5 254.3M1216.6 309.8L1222.4 301.5M1309.7 228.0L1314.5 222.2M1284.6 207.5L1289.7 201.4M1265.5 284.1L1273.1 288.1M1200.8 288.0L1203.3 284.8M1343.6 216.1L1347.1 219.0M1292.2 257.6L1297.2 251.0M1287.5 190.5L1293.8 195.8M1293.8 229.8L1297.0 226.0M1210.3 306.4L1214.8 309.3M1183.2 305.8L1187.9 301.2M1275.6 208.7L1284.9 214.5M1296.8 278.6L1300.0 274.1M1263.1 254.1L1268.2 247.5M1323.1 210.5L1329.0 201.7M1275.1 278.0L1280.4 282.9M1254.7 249.6L1259.6 253.4M1304.7 242.5L1309.1 245.7M1294.7 210.2L1299.0 213.8M1274.3 227.8L1278.3 220.8M1308.4 250.2L1311.1 252.6M1214.7 291.8L1219.4 295.4M1320.5 233.4L1323.0 230.3M1314.1 235.6L1322.3 242.3M1208.5 275.6L1212.9 279.2M1248.8 265.2L1252.9 258.0M1172.7 315.7L1179.5 321.3M1277.8 225.0L1282.9 230.2M1241.8 255.6L1249.2 247.9M1201.9 300.6L1210.1 306.2M1251.1 302.2L1253.7 298.7M1191.0 291.4L1193.6 288.2M1292.7 252.0L1300.5 257.4M1198.8 299.3L1201.1 296.4M1304.5 232.5L1310.3 223.7M1310.2 221.7L1316.1 226.2M1317.5 188.2L1322.2 192.1M1259.7 294.5L1267.0 299.2M1262.8 300.2L1271.9 306.3M1203.7 285.5L1207.8 288.7M1293.3 214.4L1295.6 211.6M1270.8 294.9L1274.2 297.5M1297.6 238.5L1302.3 232.0M1304.3 180.0L1309.3 184.0M1313.1 251.5L1315.9 248.7M1256.8 229.4L1262.5 234.1M1294.0 189.9L1297.2 186.0M1222.1 300.1L1228.3 304.7M1283.3 283.5L1292.1 289.9M1195.9 290.8L1203.1 296.1M1304.3 179.7L1310.9 186.0M1317.2 237.7L1321.0 231.8M1236.4 285.8L1241.9 280.0M1293.6 196.4L1299.1 189.9M1289.0 265.6L1291.2 262.0M1324.0 189.6L1330.6 194.4M1252.7 276.5L1258.6 269.8M1242.5 306.0L1248.2 310.6M1282.0 234.8L1286.3 229.7M1281.7 220.0L1284.8 216.6M1281.5 214.7L1284.8 216.7M1279.4 243.5L1281.9 245.6M1278.4 249.2L1281.0 251.6M1289.4 225.9L1294.8 220.1M1292.3 240.7L1294.8 237.4M1209.6 295.0L1212.4 291.1M1286.4 275.7L1291.2 280.0M1277.4 224.7L1282.6 228.3M1314.9 193.6L1323.5 198.4M1191.4 314.4L1196.5 307.2M1246.5 267.5L1255.3 274.0M1266.6 238.4L1269.3 240.3M1301.3 194.8L1304.9 197.5" fill="none" stroke="#000" stroke-width="1.3" stroke-linecap="round"/>
<path d="M1172.3 299.0L1285.3 298.5" stroke="#000" stroke-width="1.6" fill="none"/>
<polygon fill="#ff0000" points="1310.4,180.5 1317,181.5 1315,202.5 1310.4,191.5"/>
<path d="M1276.4 285.1h1.4M1234.7 328.0h1.4M1281.6 329.5h1.4M1223.0 277.8h1.4M1208.2 319.1h1.4M1354.2 196.3h1.4M1300.1 189.6h1.4M1280.5 201.1h1.4M1339.9 185.7h1.4M1367.1 202.2h1.4M1247.6 309.7h1.4M1319.6 224.2h1.4M1322.8 214.2h1.4M1185.2 299.7h1.4M1260.4 295.3h1.4M1171.8 303.1h1.4M1310.3 254.4h1.4M1290.1 220.0h1.4M1249.8 283.3h1.4M1306.6 240.5h1.4M1209.5 308.6h1.4M1293.4 200.6h1.4M1260.4 276.4h1.4M1269.1 270.1h1.4M1215.1 296.3h1.4M1373.4 207.3h1.4M1348.7 198.2h1.4M1254.2 314.0h1.4M1183.1 312.4h1.4M1324.9 233.7h1.4M1310.7 251.6h1.4M1270.1 295.1h1.4M1255.7 290.7h1.4M1203.1 300.6h1.4M1179.4 337.2h1.4M1313.1 259.9h1.4M1238.5 263.4h1.4M1192.4 310.0h1.4M1275.0 252.4h1.4M1348.5 199.8h1.4M1331.8 184.9h1.4M1302.4 202.0h1.4M1191.5 308.6h1.4M1277.9 294.7h1.4M1268.7 274.2h1.4M1285.6 225.0h1.4M1327.0 184.6h1.4M1234.8 286.8h1.4M1300.3 274.8h1.4M1286.0 299.3h1.4M1208.9 290.3h1.4M1217.8 293.8h1.4M1246.2 321.3h1.4M1300.2 254.6h1.4M1274.1 275.8h1.4M1328.1 182.8h1.4M1285.7 287.7h1.4M1351.9 190.3h1.4M1366.7 208.5h1.4M1266.3 240.9h1.4M1235.0 311.2h1.4M1201.7 287.8h1.4M1319.1 181.0h1.4M1314.4 260.6h1.4M1349.6 200.5h1.4M1374.7 199.6h1.4M1295.4 289.5h1.4M1219.7 302.1h1.4M1321.8 243.9h1.4M1264.3 331.6h1.4M1306.6 232.7h1.4M1299.6 256.0h1.4M1304.0 267.4h1.4M1303.9 216.3h1.4M1252.4 298.4h1.4M1294.3 254.8h1.4M1203.3 311.5h1.4M1177.5 301.1h1.4M1351.2 227.9h1.4M1322.3 228.8h1.4M1318.0 245.6h1.4M1254.6 333.1h1.4M1277.9 274.3h1.4M1248.3 331.1h1.4M1206.2 288.4h1.4M1234.8 285.4h1.4M1342.9 234.3h1.4M1346.8 193.4h1.4M1279.5 234.9h1.4M1238.5 263.9h1.4M1284.0 196.5h1.4M1217.0 288.5h1.4M1244.2 312.5h1.4M1342.0 225.5h1.4M1254.2 290.8h1.4M1335.8 203.7h1.4M1299.4 264.3h1.4M1184.6 308.7h1.4M1314.7 244.5h1.4M1242.0 273.9h1.4M1276.4 306.9h1.4M1288.8 294.6h1.4M1294.5 221.1h1.4M1322.6 183.1h1.4M1277.0 267.3h1.4M1345.5 222.3h1.4M1306.4 239.8h1.4M1253.4 276.1h1.4M1314.0 226.7h1.4M1262.9 267.4h1.4M1187.9 320.7h1.4M1290.7 223.5h1.4M1252.6 300.5h1.4M1230.4 269.5h1.4M1315.8 228.1h1.4M1330.0 213.5h1.4M1329.4 238.1h1.4M1289.8 244.8h1.4M1186.7 338.8h1.4M1330.1 178.4h1.4M1183.9 334.9h1.4M1310.7 246.9h1.4M1302.7 274.4h1.4M1300.5 206.1h1.4M1259.7 271.1h1.4M1333.8 199.4h1.4M1180.8 324.4h1.4M1249.8 293.8h1.4M1270.4 315.6h1.4M1183.2 318.2h1.4M1256.2 331.5h1.4M1330.4 196.4h1.4M1319.8 193.4h1.4M1327.7 223.7h1.4M1283.6 260.1h1.4M1210.5 305.9h1.4M1276.6 319.4h1.4M1208.4 313.2h1.4M1373.1 194.1h1.4M1257.9 294.0h1.4M1253.8 270.2h1.4M1204.2 293.0h1.4M1251.1 308.4h1.4M1311.9 190.2h1.4M1362.6 196.0h1.4M1313.2 208.9h1.4M1249.0 306.8h1.4M1255.0 266.2h1.4M1338.7 205.4h1.4M1272.6 248.3h1.4M1235.1 271.8h1.4M1300.4 204.6h1.4M1267.1 235.3h1.4M1192.6 322.8h1.4M1306.4 262.0h1.4M1174.1 313.9h1.4M1287.9 240.0h1.4M1319.5 251.9h1.4M1294.0 230.3h1.4M1322.2 219.5h1.4M1256.4 270.4h1.4M1194.6 285.9h1.4M1317.6 179.4h1.4M1298.0 248.4h1.4M1215.6 315.8h1.4M1316.5 185.6h1.4M1277.1 205.7h1.4M1230.1 309.2h1.4M1319.3 180.3h1.4M1357.5 191.0h1.4M1282.7 242.0h1.4M1296.2 291.7h1.4M1291.5 287.0h1.4M1303.3 237.0h1.4M1322.0 202.7h1.4M1218.1 299.9h1.4M1227.3 301.8h1.4M1193.0 291.4h1.4M1308.3 199.1h1.4M1291.7 263.8h1.4M1269.2 251.3h1.4M1339.6 211.8h1.4M1308.0 249.0h1.4M1262.1 333.4h1.4M1305.2 184.8h1.4M1310.6 234.2h1.4M1258.4 297.2h1.4M1238.5 304.6h1.4M1328.7 223.6h1.4M1303.2 254.6h1.4M1237.8 249.5h1.4M1303.8 265.3h1.4M1206.6 285.0h1.4M1284.9 282.2h1.4M1260.3 235.9h1.4M1305.6 213.0h1.4M1188.6 328.1h1.4M1255.9 324.1h1.4M1272.5 220.0h1.4M1335.1 213.8h1.4M1266.2 223.8h1.4M1374.4 209.2h1.4M1361.3 198.6h1.4M1317.0 256.8h1.4M1194.6 317.3h1.4M1349.5 207.0h1.4M1195.0 298.7h1.4M1244.2 248.6h1.4M1281.6 277.1h1.4M1241.1 297.2h1.4M1284.5 291.0h1.4M1252.7 314.4h1.4M1268.3 229.8h1.4M1333.6 208.4h1.4M1241.0 286.0h1.4M1174.0 306.4h1.4M1249.8 265.4h1.4M1198.8 303.3h1.4M1250.9 245.7h1.4M1247.5 316.9h1.4M1194.1 280.9h1.4M1271.0 283.7h1.4M1243.3 321.9h1.4M1186.9 300.3h1.4M1315.6 233.4h1.4M1280.1 216.3h1.4M1257.9 234.2h1.4M1188.7 309.6h1.4M1265.8 248.1h1.4M1233.1 325.6h1.4M1286.6 192.7h1.4M1254.6 236.5h1.4M1256.1 240.5h1.4M1273.9 303.4h1.4M1214.0 310.8h1.4M1290.4 255.6h1.4M1270.9 224.0h1.4M1285.6 244.7h1.4M1231.2 263.1h1.4M1359.9 192.9h1.4M1285.2 270.2h1.4M1282.2 292.9h1.4M1288.1 266.6h1.4M1288.0 252.3h1.4M1294.8 217.8h1.4M1245.5 270.6h1.4M1332.9 239.5h1.4M1297.5 236.1h1.4M1306.7 184.7h1.4M1260.8 282.6h1.4M1242.4 261.3h1.4M1317.1 211.3h1.4M1365.8 203.7h1.4M1293.7 240.4h1.4M1174.1 306.3h1.4M1276.9 284.7h1.4M1311.4 211.0h1.4M1301.8 239.7h1.4M1335.8 194.4h1.4M1377.2 194.9h1.4M1283.4 200.9h1.4M1320.8 175.3h1.4M1305.5 251.2h1.4M1215.9 312.5h1.4M1315.6 257.9h1.4M1293.1 275.1h1.4M1309.8 197.5h1.4M1303.1 275.9h1.4M1330.0 210.4h1.4M1199.0 299.2h1.4M1295.7 259.5h1.4M1234.2 305.2h1.4M1290.4 230.7h1.4M1310.7 262.0h1.4M1304.0 259.8h1.4M1263.1 299.6h1.4M1254.9 275.1h1.4M1250.9 316.3h1.4M1276.9 287.7h1.4M1238.2 274.2h1.4M1232.4 320.5h1.4M1308.8 248.8h1.4M1330.0 224.6h1.4M1202.8 306.0h1.4M1287.7 258.6h1.4M1315.7 259.1h1.4M1288.5 221.5h1.4M1208.4 297.6h1.4M1327.7 213.2h1.4M1296.8 229.3h1.4M1247.5 277.3h1.4M1312.9 242.8h1.4M1328.9 205.0h1.4M1221.5 302.5h1.4M1341.5 204.8h1.4M1301.0 270.6h1.4M1305.3 226.7h1.4M1315.8 190.2h1.4M1322.3 210.7h1.4M1254.7 309.2h1.4M1245.3 281.1h1.4M1249.0 251.8h1.4M1173.9 305.5h1.4M1302.4 193.7h1.4M1206.8 289.3h1.4M1237.7 257.7h1.4M1286.1 270.1h1.4M1303.3 207.6h1.4M1345.4 193.5h1.4M1253.6 254.0h1.4M1257.4 276.4h1.4M1281.8 295.6h1.4M1206.3 281.9h1.4M1306.3 229.3h1.4M1191.7 305.9h1.4M1279.3 287.9h1.4M1199.1 317.4h1.4M1327.5 242.6h1.4M1200.5 285.1h1.4M1329.0 203.2h1.4" fill="none" stroke="#000" stroke-width="1.4" stroke-linecap="round"/>
<text x="1041.5" y="56.3" font-family="'Liberation Sans',sans-serif" font-weight="bold" font-size="11.4" letter-spacing=".95" fill="#1a1a1a">KADIKÖY</text>
<text x="1332" y="174" font-family="'Liberation Sans',sans-serif" font-style="italic" font-size="11.6" letter-spacing=".12" fill="#2f7de0" stroke="#2f7de0" stroke-width=".25">BOSTANCI</text>
</g>
</svg><div id="tw" class="abs"></div>
<div id="tw-border" class="abs"></div>
<div id="tw-title" class="abs"></div>
<div id="tw-bar" class="abs"></div>
<div id="tw-name" class="abs"></div>
<div id="tw-gborder" class="abs"></div>
<svg class="abs" style="left:308px;top:423px" width="400" height="35" viewBox="308 423 400 35">
<defs>
<linearGradient id="tg" x1="0" y1="0" x2="0" y2="1"><stop offset="0" stop-color="#b5e0ea"/><stop offset="1" stop-color="#6bb9cd"/></linearGradient>
</defs>
<!-- options -->
<rect x="318.700" y="433.300" width="14.800" height="16.200" fill="#fff" stroke="#56657a" stroke-width="1.200"/>
<circle cx="322.300" cy="437.200" r="1.500" fill="#6b6b6b"/><circle cx="322.300" cy="445.600" r="1.500" fill="#6b6b6b"/>
<path d="M325.500 437h5.500M327 441h4M325.500 445.600h5.500" stroke="#a9b0b8" stroke-width="1.300"/>
<path d="M342.600 440.300h6.600l-3.300 3.800z" fill="#000"/>
<path d="M356.500 433v17" stroke="#c6c6c6" stroke-width="1.400"/>
<!-- related tables -->
<path d="M377.500 434h5v5.500M371 448h-3.500v-6" fill="none" stroke="#000" stroke-width="1.500"/>
<path d="M379.700 439l2.800 3 2.800-3zM364.600 442.500l2.900-3.200 2.900 3.200z" fill="#000"/>
<rect x="365.700" y="431.700" width="11.300" height="7.600" rx="1.300" fill="url(#tg)" stroke="#4a5b66"/>
<path d="M366.500 434.200h9.800M366.500 436.700h9.800" stroke="#2f7f98" stroke-width=".8"/>
<rect x="373.600" y="442.400" width="10.800" height="7.300" rx="1.300" fill="url(#tg)" stroke="#4a5b66"/>
<path d="M374.400 444.900h9.300M374.400 447.300h9.300" stroke="#2f7f98" stroke-width=".8"/>
<path d="M391.200 440.300h6.600l-3.300 3.800z" fill="#000"/>
<path d="M405.400 433v17" stroke="#c6c6c6" stroke-width="1.400"/>
<!-- select by attributes -->
<rect x="414.900" y="432.100" width="11.100" height="11" fill="#fff" stroke="#4a555c" stroke-width="1.200"/>
<path d="M415.500 432.700h3.300c.5 4 1.500 6.500 3.700 8.200l.3 1.600h-7.300z" fill="#10cdf0"/>
<rect x="422.600" y="439.900" width="10.800" height="9.600" fill="#fff" stroke="#4f4f4f" stroke-width="1.400"/>
<rect x="423.300" y="440.500" width="9.400" height="1.900" fill="#8eabc6"/>
<path d="M423.300 443h9.400M423.300 446.200h9.400M428 443v6" stroke="#7d7d7d" stroke-width="1"/>
<!-- switch selection -->
<rect x="442" y="432.100" width="11.100" height="11.200" fill="#fff" stroke="#4a555c" stroke-width="1.100"/>
<path d="M442.600 432.700h3.600l3.200 10.100h-6.800z" fill="#12c4e6"/>
<rect x="449.800" y="438.500" width="11.400" height="11.400" fill="#fff" stroke="#4a555c" stroke-width="1.100"/>
<path d="M454.600 439l2.700 5.500 1.800 4.900h1.600v-10.400z" fill="#12c4e6"/>
<path d="M443 446l3.100-3.600 3.100 3.600" fill="none" stroke="#d8f4fb" stroke-width="1.300"/>
<path d="M446.100 442.700l3 3h-2v3h-2v-3h-2z" fill="#0d5aa8"/>
<path d="M454 438.800l3.100 3.400 3.100-3.400" fill="none" stroke="#d8f4fb" stroke-width="1.300"/>
<path d="M457.100 439.500l-3-3.300h2v-3h2v3h2z" fill="#0d5aa8"/>
<!-- clear selection -->
<rect x="473.600" y="432" width="12.400" height="12.400" fill="#fff" stroke="#3a3a3a" stroke-width="1.500"/>
<path d="M476.500 433l3.500 5 4.500-3.500M480 438l1.200 5.500" fill="none" stroke="#b5b5b5" stroke-width="1.300"/>
<!-- zoom to selected (disabled) -->
<rect x="503.500" y="432.200" width="10.800" height="11" fill="#cdcdcd"/>
<path d="M509 433l2 4 3-2" stroke="#e6e6e6" fill="none"/>
<circle cx="502" cy="442" r="4.300" fill="#f6f6f6" stroke="#bdbdbd" stroke-width="1.200"/>
<path d="M499.500 442h5M502 439.500v5" stroke="#bdbdbd" stroke-width="1"/>
<path d="M505.200 445.200l4.200 4.200" stroke="#bdbdbd" stroke-width="2"/>
<!-- delete (disabled) -->
<path d="M528.500 436.500l11 11M539.500 436.500l-11 11" stroke="#ababab" stroke-width="2.600"/>
<path d="M550.700 433v17" stroke="#c6c6c6" stroke-width="1.400"/>
<!-- copy / paste disabled -->
<g fill="#d2d2d2" stroke="#bdbdbd" stroke-width="1">
<rect x="560" y="432.500" width="10" height="9.500"/><rect x="566.500" y="438.500" width="11.500" height="11"/>
<rect x="587.500" y="432.500" width="10" height="9.500"/><rect x="594" y="438.500" width="11.500" height="11"/>
</g>
<path d="M575.500 433v6l-2-2m2 2l2-2M603 433v6l-2-2m2 2l2-2" stroke="#b0b0b0" fill="none" stroke-width="1.200"/>
<path d="M568 439l3 10M595.500 439l3 10" stroke="#e9e9e9" stroke-width="1.200"/>
<!-- zoom disabled 2 -->
<rect x="621.500" y="432.200" width="10.800" height="11" fill="#cdcdcd"/>
<path d="M627 433l2 4 3-2" stroke="#e6e6e6" fill="none"/>
<circle cx="620" cy="442" r="4.300" fill="#f6f6f6" stroke="#bdbdbd" stroke-width="1.200"/>
<path d="M617.500 442h5M620 439.500v5" stroke="#bdbdbd" stroke-width="1"/>
<path d="M623.200 445.200l4.200 4.200" stroke="#bdbdbd" stroke-width="2"/>
<path d="M646.300 436.500l11 11M657.300 436.500l-11 11" stroke="#ababab" stroke-width="2.600"/>
</svg>
<div id="grid" style="left:313px;top:489px;width:1387px;height:294.4px">
<div class="hsel"></div>
<div class="hc" style="left:18.2px;width:59.1px"><span style="left:-69.95px;width:200px;letter-spacing:0.178px">ILADI</span></div>
<div class="hc" style="left:79.2px;width:76.6px"><span style="left:-60.55px;width:200px;letter-spacing:-0.09px">ILCEADI</span></div>
<div class="hc" style="left:157.7px;width:112.1px"><span style="left:-42.6px;width:200px;letter-spacing:-0.011px">ILCEKAYITNO</span></div>
<div class="hc" style="left:271.7px;width:103.1px"><span style="left:-47.65px;width:200px;letter-spacing:0.039px">MAHALLEADI</span></div>
<div class="hc" style="left:376.7px;width:130.1px"><span style="left:-33.55px;width:200px;letter-spacing:-0.077px">MAHALLEKODU *</span></div>
<div class="hc" style="left:508.7px;width:156.1px"><span style="left:-21.1px;width:200px;letter-spacing:0.2px">CSBMADI</span></div>
<div class="hc" style="left:666.7px;width:86.1px"><span style="left:-56.1px;width:200px;letter-spacing:-0.262px">CSBMKODU</span></div>
<div class="hc" style="left:754.7px;width:111.6px"><span style="left:-43.6px;width:200px;letter-spacing:-0.281px">CSMBTURKODU</span></div>
<div class="hc" style="left:868.2px;width:85.6px"><span style="left:-55.75px;width:200px;letter-spacing:-0.221px">CSMBTURU</span></div>
<div class="hc" style="left:955.7px;width:97.1px"><span style="left:-50.5px;width:200px;letter-spacing:0.094px">CIFT_BASLAN</span></div>
<div class="hc" style="left:1054.7px;width:129.1px"><span style="left:-34.25px;width:200px;letter-spacing:-0.246px">TEK_BASLANGIC</span></div>
<div class="hc" style="left:1185.7px;width:94.1px"><span style="left:-51.65px;width:200px;letter-spacing:-0.227px">TEK_BITIS</span></div>
<div class="hc" style="left:1281.7px;width:102.6px"><span style="left:-47.45px;width:200px;letter-spacing:-0.019px">CIFT_BITIS</span></div>
<div class="row" style="top:16px;height:18px">
<i class="sel"></i>
<span class="c" style="left:18.2px;width:60px;letter-spacing:-0.454px">İSTANBU</span>
<span class="c" style="left:79.2px;width:77.5px;letter-spacing:-0.167px">KADIKÖY</span>
<span class="c r" style="left:157.7px;width:113px">1421</span>
<span class="c" style="left:271.7px;width:104px;letter-spacing:-0.17px">BOSTANCI</span>
<span class="c r" style="left:376.7px;width:131px">40523</span>
<span class="c" style="left:508.7px;width:157px;letter-spacing:-0.259px;padding-left:2.2px">AHMET CEVDETPAŞA</span>
<span class="c r" style="left:666.7px;width:87px">196292</span>
<span class="c r" style="left:754.7px;width:112.5px">4</span>
<span class="c" style="left:868.2px;width:86.5px;letter-spacing:0.212px">SOKAK</span>
<span class="c" style="left:955.7px;width:98px">6</span>
<span class="c" style="left:1054.7px;width:130px">1</span>
<span class="c" style="left:1185.7px;width:95px">9</span>
<span class="c" style="left:1281.7px;width:103.5px">8</span>
</div>
<div class="row" style="top:34px;height:18px">
<i class="sel"></i>
<span class="c" style="left:18.2px;width:60px;letter-spacing:-0.454px">İSTANBU</span>
<span class="c" style="left:79.2px;width:77.5px;letter-spacing:-0.167px">KADIKÖY</span>
<span class="c r" style="left:157.7px;width:113px">1421</span>
<span class="c" style="left:271.7px;width:104px;letter-spacing:-0.17px">BOSTANCI</span>
<span class="c r" style="left:376.7px;width:131px">40523</span>
<span class="c" style="left:508.7px;width:157px;letter-spacing:0.94px;padding-left:2.2px">AKASYA</span>
<span class="c r" style="left:666.7px;width:87px">196337</span>
<span class="c r" style="left:754.7px;width:112.5px">4</span>
<span class="c" style="left:868.2px;width:86.5px;letter-spacing:0.212px">SOKAK</span>
<span class="c" style="left:955.7px;width:98px">8</span>
<span class="c" style="left:1054.7px;width:130px">1</span>
<span class="c" style="left:1185.7px;width:95px">25</span>
<span class="c" style="left:1281.7px;width:103.5px">26</span>
</div>
<div class="row" style="top:52px;height:17px">
<i class="sel"></i>
<span class="c" style="left:18.2px;width:60px;letter-spacing:-0.454px">İSTANBU</span>
<span class="c" style="left:79.2px;width:77.5px;letter-spacing:-0.167px">KADIKÖY</span>
<span class="c r" style="left:157.7px;width:113px">1421</span>
<span class="c" style="left:271.7px;width:104px;letter-spacing:-0.17px">BOSTANCI</span>
<span class="c r" style="left:376.7px;width:131px">40523</span>
<span class="c" style="left:508.7px;width:157px;letter-spacing:0.691px;padding-left:2.2px">AKASYALI</span>
<span class="c r" style="left:666.7px;width:87px">196340</span>
<span class="c r" style="left:754.7px;width:112.5px">4</span>
<span class="c" style="left:868.2px;width:86.5px;letter-spacing:0.212px">SOKAK</span>
<span class="c" style="left:955.7px;width:98px">2</span>
<span class="c" style="left:1054.7px;width:130px">1</span>
<span class="c" style="left:1185.7px;width:95px">9</span>
<span class="c" style="left:1281.7px;width:103.5px">10</span>
</div>
<div class="row" style="top:69px;height:17px">
<i class="sel"></i>
<span class="c" style="left:18.2px;width:60px;letter-spacing:-0.454px">İSTANBU</span>
<span class="c" style="left:79.2px;width:77.5px;letter-spacing:-0.167px">KADIKÖY</span>
<span class="c r" style="left:157.7px;width:113px">1421</span>
<span class="c" style="left:271.7px;width:104px;letter-spacing:-0.17px">BOSTANCI</span>
<span class="c r" style="left:376.7px;width:131px">40523</span>
<span class="c" style="left:508.7px;width:157px;letter-spacing:-0.434px;padding-left:2.2px">ARDIÇ</span>
<span class="c r" style="left:666.7px;width:87px">196350</span>
<span class="c r" style="left:754.7px;width:112.5px">4</span>
<span class="c" style="left:868.2px;width:86.5px;letter-spacing:0.212px">SOKAK</span>
<span class="c" style="left:955.7px;width:98px">2</span>
<span class="c" style="left:1054.7px;width:130px">1</span>
<span class="c" style="left:1185.7px;width:95px">13</span>
<span class="c" style="left:1281.7px;width:103.5px">16</span>
</div>
<div class="row" style="top:86px;height:18px">
<i class="sel"></i>
<span class="c" style="left:18.2px;width:60px;letter-spacing:-0.454px">İSTANBU</span>
<span class="c" style="left:79.2px;width:77.5px;letter-spacing:-0.167px">KADIKÖY</span>
<span class="c r" style="left:157.7px;width:113px">1421</span>
<span class="c" style="left:271.7px;width:104px;letter-spacing:-0.17px">BOSTANCI</span>
<span class="c r" style="left:376.7px;width:131px">40523</span>
<span class="c" style="left:508.7px;width:157px;letter-spacing:0.13px;padding-left:2.2px">ARMAĞAN</span>
<span class="c r" style="left:666.7px;width:87px">196333</span>
<span class="c r" style="left:754.7px;width:112.5px">4</span>
<span class="c" style="left:868.2px;width:86.5px;letter-spacing:0.212px">SOKAK</span>
<span class="c" style="left:955.7px;width:98px">2</span>
<span class="c" style="left:1054.7px;width:130px">1</span>
<span class="c" style="left:1185.7px;width:95px">15</span>
<span class="c" style="left:1281.7px;width:103.5px">4</span>
</div>
<div class="row" style="top:104px;height:17px">
<i class="sel"></i>
<span class="c" style="left:18.2px;width:60px;letter-spacing:-0.454px">İSTANBU</span>
<span class="c" style="left:79.2px;width:77.5px;letter-spacing:-0.167px">KADIKÖY</span>
<span class="c r" style="left:157.7px;width:113px">1421</span>
<span class="c" style="left:271.7px;width:104px;letter-spacing:-0.17px">BOSTANCI</span>
<span class="c r" style="left:376.7px;width:131px">40523</span>
<span class="c" style="left:508.7px;width:157px;letter-spacing:0.395px;padding-left:2.2px">BAĞDAT</span>
<span class="c r" style="left:666.7px;width:87px">196336</span>
<span class="c r" style="left:754.7px;width:112.5px">3</span>
<span class="c" style="left:868.2px;width:86.5px;letter-spacing:0.209px">CADDE</span>
<span class="c" style="left:955.7px;width:98px">442</span>
<span class="c" style="left:1054.7px;width:130px">469</span>
<span class="c" style="left:1185.7px;width:95px">545</span>
<span class="c" style="left:1281.7px;width:103.5px">552</span>
</div>
<div class="row" style="top:121px;height:18px">
<i class="sel"></i>
<span class="c" style="left:18.2px;width:60px;letter-spacing:-0.454px">İSTANBU</span>
<span class="c" style="left:79.2px;width:77.5px;letter-spacing:-0.167px">KADIKÖY</span>
<span class="c r" style="left:157.7px;width:113px">1421</span>
<span class="c" style="left:271.7px;width:104px;letter-spacing:-0.17px">BOSTANCI</span>
<span class="c r" style="left:376.7px;width:131px">40523</span>
<span class="c" style="left:508.7px;width:157px;letter-spacing:-0.197px;padding-left:2.2px">BAHÇELERARASI</span>
<span class="c r" style="left:666.7px;width:87px">196327</span>
<span class="c r" style="left:754.7px;width:112.5px">4</span>
<span class="c" style="left:868.2px;width:86.5px;letter-spacing:0.212px">SOKAK</span>
<span class="c" style="left:955.7px;width:98px">2</span>
<span class="c" style="left:1054.7px;width:130px">1</span>
<span class="c" style="left:1185.7px;width:95px">25</span>
<span class="c" style="left:1281.7px;width:103.5px">6</span>
</div>
<div class="row" style="top:139px;height:17px">
<i class="sel"></i>
<span class="c" style="left:18.2px;width:60px;letter-spacing:-0.454px">İSTANBU</span>
<span class="c" style="left:79.2px;width:77.5px;letter-spacing:-0.167px">KADIKÖY</span>
<span class="c r" style="left:157.7px;width:113px">1421</span>
<span class="c" style="left:271.7px;width:104px;letter-spacing:-0.17px">BOSTANCI</span>
<span class="c r" style="left:376.7px;width:131px">40523</span>
<span class="c" style="left:508.7px;width:157px;letter-spacing:-0.312px;padding-left:2.2px">BALÇİÇEĞİ</span>
<span class="c r" style="left:666.7px;width:87px">194337</span>
<span class="c r" style="left:754.7px;width:112.5px">4</span>
<span class="c" style="left:868.2px;width:86.5px;letter-spacing:0.212px">SOKAK</span>
<span class="c" style="left:955.7px;width:98px">2</span>
<span class="c" style="left:1054.7px;width:130px">1</span>
<span class="c" style="left:1185.7px;width:95px">5</span>
<span class="c" style="left:1281.7px;width:103.5px">4</span>
</div>
<div class="row" style="top:156px;height:18px">
<i class="sel"></i>
<span class="c" style="left:18.2px;width:60px;letter-spacing:-0.454px">İSTANBU</span>
<span class="c" style="left:79.2px;width:77.5px;letter-spacing:-0.167px">KADIKÖY</span>
<span class="c r" style="left:157.7px;width:113px">1421</span>
<span class="c" style="left:271.7px;width:104px;letter-spacing:-0.17px">BOSTANCI</span>
<span class="c r" style="left:376.7px;width:131px">40523</span>
<span class="c" style="left:508.7px;width:157px;letter-spacing:-0.226px;padding-left:2.2px">BALIKÇI YUNUS</span>
<span class="c r" style="left:666.7px;width:87px">196352</span>
<span class="c r" style="left:754.7px;width:112.5px">4</span>
<span class="c" style="left:868.2px;width:86.5px;letter-spacing:0.212px">SOKAK</span>
<span class="c" style="left:955.7px;width:98px">2</span>
<span class="c" style="left:1054.7px;width:130px">7</span>
<span class="c" style="left:1185.7px;width:95px">7</span>
<span class="c" style="left:1281.7px;width:103.5px">12</span>
</div>
<div class="row" style="top:174px;height:17px">
<i class="sel"></i>
<span class="c" style="left:18.2px;width:60px;letter-spacing:-0.454px">İSTANBU</span>
<span class="c" style="left:79.2px;width:77.5px;letter-spacing:-0.167px">KADIKÖY</span>
<span class="c r" style="left:157.7px;width:113px">1421</span>
<span class="c" style="left:271.7px;width:104px;letter-spacing:-0.17px">BOSTANCI</span>
<span class="c r" style="left:376.7px;width:131px">40523</span>
<span class="c" style="left:508.7px;width:157px;letter-spacing:0.298px;padding-left:2.2px">BALKAN</span>
<span class="c r" style="left:666.7px;width:87px">196329</span>
<span class="c r" style="left:754.7px;width:112.5px">4</span>
<span class="c" style="left:868.2px;width:86.5px;letter-spacing:0.212px">SOKAK</span>
<span class="c" style="left:955.7px;width:98px">2</span>
<span class="c" style="left:1054.7px;width:130px">1</span>
<span class="c" style="left:1185.7px;width:95px">5</span>
<span class="c" style="left:1281.7px;width:103.5px">36</span>
</div>
<div class="row" style="top:191px;height:17px">
<i class="sel"></i>
<span class="c" style="left:18.2px;width:60px;letter-spacing:-0.454px">İSTANBU</span>
<span class="c" style="left:79.2px;width:77.5px;letter-spacing:-0.167px">KADIKÖY</span>
<span class="c r" style="left:157.7px;width:113px">1421</span>
<span class="c" style="left:271.7px;width:104px;letter-spacing:-0.17px">BOSTANCI</span>
<span class="c r" style="left:376.7px;width:131px">40523</span>
<span class="c" style="left:508.7px;width:157px;letter-spacing:0.095px;padding-left:2.2px">BOSTAN</span>
<span class="c r" style="left:666.7px;width:87px">196332</span>
<span class="c r" style="left:754.7px;width:112.5px">4</span>
<span class="c" style="left:868.2px;width:86.5px;letter-spacing:0.212px">SOKAK</span>
<span class="c" style="left:955.7px;width:98px">2</span>
<span class="c" style="left:1054.7px;width:130px">1</span>
<span class="c" style="left:1185.7px;width:95px">21</span>
<span class="c" style="left:1281.7px;width:103.5px">18</span>
</div>
<div class="row" style="top:208px;height:18px">
<i class="sel"></i>
<span class="c" style="left:18.2px;width:60px;letter-spacing:-0.454px">İSTANBU</span>
<span class="c" style="left:79.2px;width:77.5px;letter-spacing:-0.167px">KADIKÖY</span>
<span class="c r" style="left:157.7px;width:113px">1421</span>
<span class="c" style="left:271.7px;width:104px;letter-spacing:-0.17px">BOSTANCI</span>
<span class="c r" style="left:376.7px;width:131px">40523</span>
<span class="c" style="left:508.7px;width:157px;letter-spacing:-0.012px;padding-left:2.2px">BOSTAN TARİKİ</span>
<span class="c r" style="left:666.7px;width:87px">194333</span>
<span class="c r" style="left:754.7px;width:112.5px">4</span>
<span class="c" style="left:868.2px;width:86.5px;letter-spacing:0.212px">SOKAK</span>
<span class="c" style="left:955.7px;width:98px">2</span>
<span class="c" style="left:1054.7px;width:130px">1</span>
<span class="c" style="left:1185.7px;width:95px">27</span>
<span class="c" style="left:1281.7px;width:103.5px">24</span>
</div>
<div class="row" style="top:226px;height:17px">
<i class="sel"></i>
<span class="c" style="left:18.2px;width:60px;letter-spacing:-0.454px">İSTANBU</span>
<span class="c" style="left:79.2px;width:77.5px;letter-spacing:-0.167px">KADIKÖY</span>
<span class="c r" style="left:157.7px;width:113px">1421</span>
<span class="c" style="left:271.7px;width:104px;letter-spacing:-0.17px">BOSTANCI</span>
<span class="c r" style="left:376.7px;width:131px">40523</span>
<span class="c" style="left:508.7px;width:157px;letter-spacing:-0.201px;padding-left:2.2px">BOSTAN TÜCCARI</span>
<span class="c r" style="left:666.7px;width:87px">196351</span>
<span class="c r" style="left:754.7px;width:112.5px">4</span>
<span class="c" style="left:868.2px;width:86.5px;letter-spacing:0.212px">SOKAK</span>
<span class="c" style="left:955.7px;width:98px">2</span>
<span class="c" style="left:1054.7px;width:130px">1</span>
<span class="c" style="left:1185.7px;width:95px">7</span>
<span class="c" style="left:1281.7px;width:103.5px">8</span>
</div>
<div class="row" style="top:243px;height:18px">
<i class="sel"></i>
<span class="c" style="left:18.2px;width:60px;letter-spacing:-0.454px">İSTANBU</span>
<span class="c" style="left:79.2px;width:77.5px;letter-spacing:-0.167px">KADIKÖY</span>
<span class="c r" style="left:157.7px;width:113px">1421</span>
<span class="c" style="left:271.7px;width:104px;letter-spacing:-0.17px">BOSTANCI</span>
<span class="c r" style="left:376.7px;width:131px">40523</span>
<span class="c" style="left:508.7px;width:157px;letter-spacing:-0.234px;padding-left:2.2px">BOSTANCI CAMİİ</span>
<span class="c r" style="left:666.7px;width:87px">196323</span>
<span class="c r" style="left:754.7px;width:112.5px">4</span>
<span class="c" style="left:868.2px;width:86.5px;letter-spacing:0.212px">SOKAK</span>
<span class="c" style="left:955.7px;width:98px">4</span>
<span class="c" style="left:1054.7px;width:130px">1</span>
<span class="c" style="left:1185.7px;width:95px">21</span>
<span class="c" style="left:1281.7px;width:103.5px">24</span>
</div>
<div class="row" style="top:261px;height:17px">
<i class="sel"></i>
<span class="c" style="left:18.2px;width:60px;letter-spacing:-0.454px">İSTANBU</span>
<span class="c" style="left:79.2px;width:77.5px;letter-spacing:-0.167px">KADIKÖY</span>
<span class="c r" style="left:157.7px;width:113px">1421</span>
<span class="c" style="left:271.7px;width:104px;letter-spacing:-0.17px">BOSTANCI</span>
<span class="c r" style="left:376.7px;width:131px">40523</span>
<span class="c" style="left:508.7px;width:157px;letter-spacing:0.12px;padding-left:2.2px">BOSTANCI YANYOL</span>
<span class="c r" style="left:666.7px;width:87px">194338</span>
<span class="c r" style="left:754.7px;width:112.5px">3</span>
<span class="c" style="left:868.2px;width:86.5px;letter-spacing:0.209px">CADDE</span>
<span class="c" style="left:955.7px;width:98px">6</span>
<span class="c" style="left:1054.7px;width:130px"></span>
<span class="c" style="left:1185.7px;width:95px"></span>
<span class="c" style="left:1281.7px;width:103.5px">10</span>
</div>
<div class="row" style="top:278px;height:18px">
<i class="sel"></i>
<span class="c" style="left:18.2px;width:60px;letter-spacing:-0.454px">İSTANBU</span>
<span class="c" style="left:79.2px;width:77.5px;letter-spacing:-0.167px">KADIKÖY</span>
<span class="c r" style="left:157.7px;width:113px">1421</span>
<span class="c" style="left:271.7px;width:104px;letter-spacing:-0.17px">BOSTANCI</span>
<span class="c r" style="left:376.7px;width:131px">40523</span>
<span class="c" style="left:508.7px;width:157px;letter-spacing:-0.207px;padding-left:2.2px">BOSTANİCİ</span>
<span class="c r" style="left:666.7px;width:87px">196322</span>
<span class="c r" style="left:754.7px;width:112.5px">4</span>
<span class="c" style="left:868.2px;width:86.5px;letter-spacing:0.212px">SOKAK</span>
<span class="c" style="left:955.7px;width:98px">2</span>
<span class="c" style="left:1054.7px;width:130px">1</span>
<span class="c" style="left:1185.7px;width:95px">9</span>
<span class="c" style="left:1281.7px;width:103.5px">8</span>
</div>
</div><div id="nav" class="abs"></div>
<div id="navstrip" class="abs" style="left:308px;top:783px;width:2px;height:35px;background:#6d6d6d"></div>
<div id="navbox" class="abs"></div>
<div id="tab" class="abs"></div>
<svg class="abs" style="left:310px;top:784px" width="270" height="34" viewBox="310 784 270 34">
<path d="M323.700 796.300h2.400v8.600h-2.400zM327.400 800.600l6.600-4.400v8.800zM353.300 800.600l6.300-4.400v8.800z" fill="#000"/>
<path d="M456.200 796.200l6 4.400-6 4.400zM481.300 796.200l6.300 4.400-6.300 4.400zM489.400 796.300h2.500v8.600h-2.500z" fill="#000"/>
<path d="M503.300 793v17M565.900 793v17" stroke="#c3c3c3" stroke-width="1.300"/>
<rect x="512.300" y="791.400" width="17.400" height="18" rx="1.500" fill="#fff" stroke="#6e6e6e" stroke-width="1.200"/>
<path d="M513.200 796h15.600M513.200 799.200h15.600M513.200 802.400h15.600M513.200 805.600h15.600" stroke="#5fb1c4" stroke-width="2"/>
<path d="M513.200 808h15.600" stroke="#9ccfda" stroke-width="1.400"/>
<rect x="535.900" y="788.200" width="26.200" height="25.800" fill="#dce9f7" stroke="#2a8be2" stroke-width="1.300"/>
<rect x="539.600" y="791.400" width="17.400" height="10.400" rx="1.500" fill="#9ad2df" stroke="#4a5b66" stroke-width="1.200"/>
<path d="M540.500 794.200h15.600M540.500 797h15.600M540.500 799.700h15.600" stroke="#3f98b0" stroke-width="1.300"/>
</svg>
<div class="abs ui" style="left:-1.9px;top:5.0px;letter-spacing:0.036px">Table Of Contents</div>
<div class="abs ui" style="left:119.7px;top:85.2px;letter-spacing:0.060px">KAPINO.gdb</div>
<div class="abs ui" style="left:93.5px;top:152.7px;letter-spacing:-0.686px">TURKIYE.gdb</div>
<div class="abs ui" style="left:96.5px;top:175.2px;letter-spacing:0.010px">MAHALLE</div>
<div class="abs ui" style="left:119.9px;top:220.4px;letter-spacing:0.037px">MAHALLEADI</div>
<div class="abs ui" style="left:113.6px;top:242.9px;letter-spacing:-0.462px">BOSTANCI</div>
<div class="abs ui" style="left:96.2px;top:265.4px;letter-spacing:-1.018px">ILCE</div>
<div class="abs ui" style="left:119.9px;top:310.4px;letter-spacing:-0.514px">ILCEADI</div>
<div class="abs ui" style="left:113.6px;top:332.9px;letter-spacing:-0.782px">KADIKÖY</div>
<div class="abs ui" style="left:96.2px;top:355.4px;letter-spacing:-1.072px">IL</div>
<div class="abs ui" style="left:119.9px;top:400.4px;letter-spacing:-0.075px">ILADI</div>
<div class="abs ui" style="left:113.4px;top:422.9px;letter-spacing:-0.700px">İSTANBUL</div>
<div class="abs ui" style="left:312.9px;top:402.1px;letter-spacing:-0.148px">Table</div>
<div class="abs ui" style="left:312.5px;top:461.7px;letter-spacing:-0.924px">SOKAK</div>
<div class="abs ui" style="left:317.3px;top:822.2px;letter-spacing:-0.949px">SOKAK</div>
<div class="abs ui" style="left:431.8px;top:792.2px;letter-spacing:0.000px">0</div>
<div class="abs ui" style="left:574.4px;top:792.2px;letter-spacing:-0.097px">(90 out of 943174 Selected)</div>

</body></html>
